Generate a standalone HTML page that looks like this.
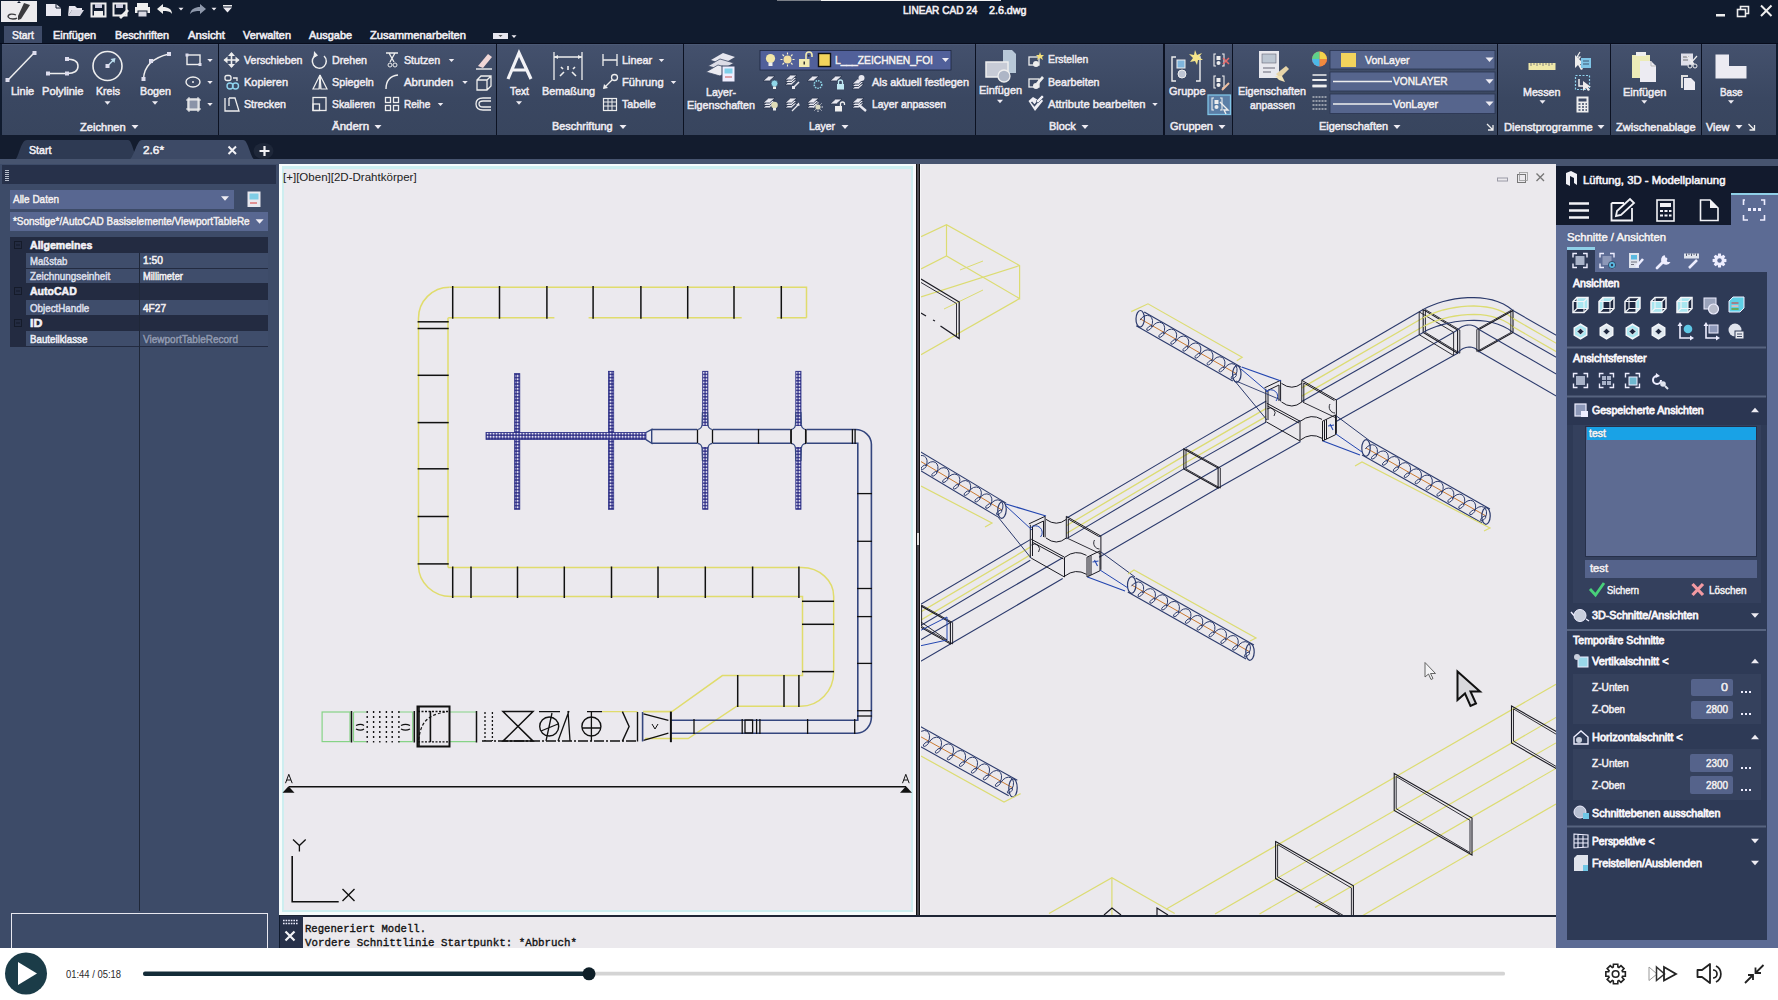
<!DOCTYPE html>
<html><head><meta charset="utf-8"><title>LINEAR CAD 24</title>
<style>
*{margin:0;padding:0;box-sizing:border-box}
html,body{width:1778px;height:1000px;overflow:hidden;background:#101b2e;font-family:"Liberation Sans",sans-serif;position:relative}
.a{position:absolute}
svg.a{overflow:visible}
.t{position:absolute;white-space:pre;transform-origin:0 50%;-webkit-text-stroke:0.6px currentColor}
</style></head><body>
<div class="a" style="left:0px;top:0px;width:1778px;height:26px;background:#101b2e;"></div><div class="a" style="left:821px;top:0px;width:180px;height:1px;background:#f4f4f4;"></div><div class="a" style="left:777px;top:0px;width:44px;height:1px;background:#7a7f88;"></div><div class="a" style="left:1px;top:1px;width:36px;height:21px;background:#ecebee;"></div><svg class="a" style="left:0px;top:0px;" width="1778" height="24" viewBox="0 0 1778 24"><path d="M24 3 L30 5 L21 19 L18 20 L18 16 Z" fill="#3a3a3e"/><path d="M8 17 C8 13 14 14 16 15" stroke="#3a3a3e" stroke-width="1.3" fill="none"/><path d="M8 17 C10 20 16 19 17 18" stroke="#3a3a3e" stroke-width="1.3" fill="none"/><path d="M17 3 L19 1 L21 3 Z" fill="#101b2e"/><path d="M46 4 H56 L61 8 V16 H46 Z" fill="#e8e8f0"/><path d="M56 4 V8 H61" fill="none" stroke="#101b2e" stroke-width="1"/><path d="M69 6 H75 L77 8 H82 V10 H72 L68 16 Z" fill="#e8e8f0"/><path d="M72 10 H84 L80 16 H68 Z" fill="#d8d8e2"/><rect x="91.5" y="3.5" width="14" height="13" fill="none" stroke="#eee" stroke-width="2"/><rect x="94" y="11" width="9" height="5" fill="#eee"/><rect x="95" y="4" width="7" height="4" fill="#ccd"/><rect x="113.5" y="3.5" width="13" height="12" fill="none" stroke="#eee" stroke-width="2"/><rect x="116" y="4" width="7" height="4" fill="#ccd"/><path d="M119 17 L127 9 L129 11 L121 19 Z" fill="#eee"/><rect x="137" y="3" width="11" height="4" fill="#eee"/><rect x="135" y="7" width="15" height="6" fill="#eee"/><rect x="138" y="11" width="9" height="6" fill="#d8d8e2" stroke="#101b2e"/><path d="M157 9 L163 4 V7 C168 7 172 9 172 14 C170 11 167 11 163 11 V14 Z" fill="#eee"/><polygon points="178.5,7.625 183.5,7.625 181,10.375" fill="#eeecf3"/><path d="M206 9 L200 4 V7 C195 7 191 9 190 14 C193 11 196 11 200 11 V14 Z" fill="#8e98ab"/><polygon points="211.5,7.625 216.5,7.625 214,10.375" fill="#eeecf3"/><rect x="223" y="5" width="9" height="1.5" fill="#eee"/><polygon points="223.0,7.525 232.0,7.525 227.5,12.475" fill="#eeecf3"/><rect x="1716" y="14" width="9" height="2.5" fill="#eee"/><rect x="1737.5" y="9.5" width="8" height="7" fill="none" stroke="#eee" stroke-width="1.6"/><path d="M1740.5 9 V6.5 H1748.5 V13.5 H1746" fill="none" stroke="#eee" stroke-width="1.6"/><path d="M1761 5.5 L1771.5 16 M1771.5 5.5 L1761 16" stroke="#eee" stroke-width="2"/></svg><span class="t" style="left:903.0px;top:5.1px;font-size:11.5px;line-height:11.5px;font-weight:400;color:#f2f0f5;transform:scaleX(0.876);text-shadow:0 0 1.2px rgba(8,12,25,0.95);">LINEAR CAD 24</span><span class="t" style="left:989.0px;top:5.1px;font-size:11.5px;line-height:11.5px;font-weight:400;color:#f2f0f5;transform:scaleX(0.931);text-shadow:0 0 1.2px rgba(8,12,25,0.95);">2.6.dwg</span><div class="a" style="left:0px;top:26px;width:1778px;height:18px;background:#101b2e;"></div><div class="a" style="left:4px;top:26px;width:38px;height:18px;background:#3e4b68;"></div><svg class="a" style="left:0px;top:26px;" width="1778" height="18" viewBox="0 26 1778 18"><rect x="493" y="33" width="15" height="6" fill="#e6e6ee"/><polygon points="498.5,34.9 502.5,34.9 500.5,37.1" fill="#555"/><polygon points="511.5,35.125 516.5,35.125 514,37.875" fill="#eeecf3"/></svg><span class="t" style="left:12.0px;top:30.1px;font-size:11.5px;line-height:11.5px;font-weight:400;color:#f0eef4;transform:scaleX(0.905);text-shadow:0 0 1.2px rgba(8,12,25,0.95);">Start</span><span class="t" style="left:53.0px;top:30.1px;font-size:11.5px;line-height:11.5px;font-weight:400;color:#f0eef4;transform:scaleX(0.947);text-shadow:0 0 1.2px rgba(8,12,25,0.95);">Einfügen</span><span class="t" style="left:115.0px;top:30.1px;font-size:11.5px;line-height:11.5px;font-weight:400;color:#f0eef4;transform:scaleX(0.939);text-shadow:0 0 1.2px rgba(8,12,25,0.95);">Beschriften</span><span class="t" style="left:188.0px;top:30.1px;font-size:11.5px;line-height:11.5px;font-weight:400;color:#f0eef4;transform:scaleX(0.981);text-shadow:0 0 1.2px rgba(8,12,25,0.95);">Ansicht</span><span class="t" style="left:243.0px;top:30.1px;font-size:11.5px;line-height:11.5px;font-weight:400;color:#f0eef4;transform:scaleX(0.950);text-shadow:0 0 1.2px rgba(8,12,25,0.95);">Verwalten</span><span class="t" style="left:309.0px;top:30.1px;font-size:11.5px;line-height:11.5px;font-weight:400;color:#f0eef4;transform:scaleX(0.947);text-shadow:0 0 1.2px rgba(8,12,25,0.95);">Ausgabe</span><span class="t" style="left:370.0px;top:30.1px;font-size:11.5px;line-height:11.5px;font-weight:400;color:#f0eef4;transform:scaleX(0.969);text-shadow:0 0 1.2px rgba(8,12,25,0.95);">Zusammenarbeiten</span><div class="a" style="left:0px;top:44px;width:1778px;height:91px;background:linear-gradient(#44516d,#3a4761 60%,#38455e);"></div><div class="a" style="left:0px;top:44px;width:2px;height:91px;background:#101b2e;"></div><div class="a" style="left:0px;top:43px;width:1778px;height:1px;background:#070c1c;"></div><div class="a" style="left:2px;top:44px;width:1774px;height:1px;background:#4b5975;"></div><div class="a" style="left:217.5px;top:44px;width:1.6px;height:91px;background:#0c1222;"></div><div class="a" style="left:495.5px;top:44px;width:1.6px;height:91px;background:#0c1222;"></div><div class="a" style="left:682.5px;top:44px;width:1.6px;height:91px;background:#0c1222;"></div><div class="a" style="left:974.5px;top:44px;width:1.6px;height:91px;background:#0c1222;"></div><div class="a" style="left:1163.3px;top:44px;width:1.6px;height:91px;background:#0c1222;"></div><div class="a" style="left:1231.5px;top:44px;width:1.6px;height:91px;background:#0c1222;"></div><div class="a" style="left:1496.5px;top:44px;width:1.6px;height:91px;background:#0c1222;"></div><div class="a" style="left:1609.5px;top:44px;width:1.6px;height:91px;background:#0c1222;"></div><div class="a" style="left:1700.5px;top:44px;width:1.6px;height:91px;background:#0c1222;"></div><div class="a" style="left:1776px;top:44px;width:2px;height:91px;background:#101b2e;"></div><svg class="a" style="left:0px;top:44px;" width="1778" height="91" viewBox="0 44 1778 91"><path d="M8 80 L34 53" stroke="#eee" stroke-width="1.5"/><rect x="5.5" y="78" width="4" height="4" fill="#dde"/><rect x="32.5" y="51" width="4" height="4" fill="#dde"/><path d="M48 73.5 H67 M66 59 C75 59 78 62 78 66 C78 70 75 73.5 67 73.5" stroke="#eee" stroke-width="1.5" fill="none"/><rect x="46" y="71.5" width="4" height="4" fill="#dde"/><rect x="65" y="71.5" width="4" height="4" fill="#dde"/><rect x="65" y="57" width="4" height="4" fill="#dde"/><circle cx="107.5" cy="66" r="14.5" stroke="#eee" stroke-width="1.6" fill="none"/><path d="M107.5 66 L114 59.5" stroke="#bde" stroke-width="1.4"/><polygon points="115.5,58 110.5,59 114.5,63" fill="#bde"/><rect x="105.5" y="64" width="4" height="4" fill="#dde"/><polygon points="104.5,101.35 110.5,101.35 107.5,104.65" fill="#eeecf3"/><path d="M143.5 79 C144 67 152 58 169 54" stroke="#eee" stroke-width="1.5" fill="none"/><rect x="141.5" y="77" width="4" height="4" fill="#dde"/><rect x="149" y="59" width="4" height="4" fill="#dde"/><rect x="167" y="52" width="4" height="4" fill="#dde"/><polygon points="152.0,101.35 158.0,101.35 155,104.65" fill="#eeecf3"/><rect x="187" y="55" width="13" height="9.5" fill="none" stroke="#eee" stroke-width="1.4"/><rect x="185.5" y="53.5" width="3" height="3" fill="#dde"/><rect x="198.5" y="63" width="3" height="3" fill="#dde"/><polygon points="207.25,58.9875 212.75,58.9875 210,62.0125" fill="#eeecf3"/><ellipse cx="193" cy="82" rx="7" ry="5" stroke="#eee" stroke-width="1.4" fill="none"/><circle cx="193" cy="82" r="1" fill="#eee"/><polygon points="207.25,80.9875 212.75,80.9875 210,84.0125" fill="#eeecf3"/><rect x="188" y="99" width="11" height="11" fill="#8a93a8" stroke="#eee" stroke-width="1.4"/><path d="M186 100 H201 M186 109 H201 M189 97 V112 M198 97 V112" stroke="#eee" stroke-width="1"/><polygon points="207.25,102.9875 212.75,102.9875 210,106.0125" fill="#eeecf3"/><polygon points="131.5,125.075 138.5,125.075 135,128.925" fill="#eeecf3"/><path d="M231.5 53 V67 M224.5 60 H238.5" stroke="#eee" stroke-width="1.6"/><polygon points="231.5,52 228,56 235,56" fill="#eee"/><polygon points="231.5,68 228,64 235,64" fill="#eee"/><polygon points="223.5,60 227.5,56.5 227.5,63.5" fill="#eee"/><polygon points="239.5,60 235.5,56.5 235.5,63.5" fill="#eee"/><rect x="225" y="75.5" width="6" height="5" rx="2" stroke="#eee" stroke-width="1.3" fill="none"/><path d="M233 78 H237 V81" stroke="#eee" stroke-width="1.3" fill="none"/><circle cx="230" cy="86" r="3" stroke="#8fd3ee" stroke-width="1.4" fill="none"/><circle cx="235.5" cy="86" r="3" stroke="#8fd3ee" stroke-width="1.4" fill="none"/><path d="M225 98 V111 H239 L235 98 H229" stroke="#eee" stroke-width="1.3" fill="none"/><path d="M229 98 V106" stroke="#eee" stroke-width="1.3"/><path d="M324 56 A7 7 0 1 1 316 55" stroke="#eee" stroke-width="1.5" fill="none"/><polygon points="314,51 318,55.5 313.5,58" fill="#eee"/><path d="M320 75 L313 89 H319 Z M320 75 L327 89 H321 Z" stroke="#eee" stroke-width="1.2" fill="none"/><path d="M320 75 V89" stroke="#eee" stroke-width="1.3"/><rect x="313" y="97.5" width="13" height="13" stroke="#eee" stroke-width="1.3" fill="none"/><rect x="313" y="104" width="6.5" height="6.5" stroke="#eee" stroke-width="1.3" fill="none"/><path d="M386 53 H398 M389 53 L394 62 M395 53 L390 62" stroke="#eee" stroke-width="1.3"/><circle cx="390" cy="65" r="2" stroke="#eee" fill="none"/><circle cx="395" cy="65" r="2" stroke="#eee" fill="none"/><path d="M386 89 C386 80 390 76 398 75" stroke="#eee" stroke-width="1.4" fill="none"/><rect x="385.5" y="97.5" width="5" height="5" stroke="#eee" stroke-width="1.3" fill="none"/><rect x="393.5" y="97.5" width="5" height="5" stroke="#eee" stroke-width="1.3" fill="none"/><rect x="385.5" y="105.5" width="5" height="5" stroke="#eee" stroke-width="1.3" fill="none"/><rect x="393.5" y="105.5" width="5" height="5" stroke="#eee" stroke-width="1.3" fill="none"/><polygon points="448.75,58.9875 454.25,58.9875 451.5,62.0125" fill="#eeecf3"/><polygon points="462.25,80.9875 467.75,80.9875 465,84.0125" fill="#eeecf3"/><polygon points="437.75,102.9875 443.25,102.9875 440.5,106.0125" fill="#eeecf3"/><path d="M478 66 L488 54 L492 57 L483 68 Z" fill="#f1d7d7"/><path d="M476 69 H492" stroke="#eee" stroke-width="1.4"/><path d="M477 80 L481 76 H491 V86 L487 90 H477 Z M477 80 H487 V90 M487 80 L491 76" stroke="#eee" stroke-width="1.3" fill="none"/><path d="M491 98 H483 C478 98 476 101 476 104 C476 107 478 110 483 110 H491 M491 101 H483 C481 101 479 102 479 104 C479 106 481 107 483 107 H491" stroke="#eee" stroke-width="1.3" fill="none"/><polygon points="374.5,125.075 381.5,125.075 378,128.925" fill="#eeecf3"/><path d="M508 79 L519 53 L531 79 M512 70 H526" stroke="#f2f2f6" stroke-width="3.2" fill="none"/><polygon points="516.0,101.35 522.0,101.35 519,104.65" fill="#eeecf3"/><path d="M554 52 V80 M582 52 V80 M554 57 H582" stroke="#eee" stroke-width="1.3"/><polygon points="554,57 558,55 558,59" fill="#eee"/><polygon points="582,57 578,55 578,59" fill="#eee"/><path d="M560 76 L564 72 M576 76 L572 72 M568 70 V66 M563 69 L561 67 M573 69 L575 67" stroke="#eee" stroke-width="1.6"/><path d="M603 54 V66 M617 54 V66 M603 60 H617" stroke="#eee" stroke-width="1.3"/><path d="M604 88 L612 80" stroke="#eee" stroke-width="1.3"/><circle cx="614.5" cy="77.5" r="3" stroke="#eee" stroke-width="1.3" fill="none"/><polygon points="603,89 604,84 608,88" fill="#eee"/><rect x="603.5" y="98.5" width="13" height="12" stroke="#eee" stroke-width="1.2" fill="none"/><path d="M603.5 102 H616.5 M603.5 106 H616.5 M608 98.5 V110.5 M612 98.5 V110.5" stroke="#eee" stroke-width="1"/><polygon points="658.75,58.9875 664.25,58.9875 661.5,62.0125" fill="#eeecf3"/><polygon points="670.75,80.9875 676.25,80.9875 673.5,84.0125" fill="#eeecf3"/><polygon points="619.5,125.075 626.5,125.075 623,128.925" fill="#eeecf3"/><path d="M711 60 L723 53 L735 57 L723 64 Z" fill="#e6e6ee"/><path d="M708 66 L720 59 L734 63 L722 70 Z" fill="#dcdce6" stroke="#3c4965" stroke-width="0.8"/><path d="M706 72 L718 65 L732 69 L720 76 Z" fill="#ececf2" stroke="#3c4965" stroke-width="0.8"/><rect x="722" y="66" width="13" height="16" fill="#eef" stroke="#3c4965"/><rect x="724.5" y="68.5" width="8" height="5" fill="#7fd0ea"/><path d="M725 77 H732" stroke="#c55" stroke-width="1"/><rect x="760" y="50.5" width="191" height="19.5" fill="#51609a" stroke="#1d2640" stroke-width="0.8"/><circle cx="770.5" cy="58.5" r="4.6" fill="#f2e6a8"/><rect x="768.5" y="62.5" width="4" height="3.5" fill="#eee"/><circle cx="787.5" cy="59.5" r="4" fill="#f2dfa0"/><path d="M787.5 52.5 V54.5 M787.5 64.5 V66.5 M780.5 59.5 H782.5 M792.5 59.5 H794.5 M782.5 54.5 L784 56 M792.5 54.5 L791 56 M782.5 64.5 L784 63 M792.5 64.5 L791 63" stroke="#f4f0d0" stroke-width="1.1"/><rect x="799" y="59" width="10.5" height="8" fill="#f0eab0"/><rect x="803.5" y="61.5" width="1.5" height="3" fill="#333"/><path d="M806 59 V55 A3 3 0 0 1 812 55 V57" stroke="#f0eab0" stroke-width="1.6" fill="none"/><circle cx="808.7" cy="55.8" r="1" fill="#333"/><rect x="818.5" y="53.5" width="12" height="13" fill="#f2d35c" stroke="#111" stroke-width="1.4"/><path d="M763 81 L768.5 76 H775 L769.5 81 Z" fill="#e8e8f0" stroke="#2c3850" stroke-width="0.9"/><circle cx="774.5" cy="83.5" r="3.4" fill="#8fd6e8" stroke="#2a3a55" stroke-width="0.6"/><rect x="773" y="86.5" width="3" height="2.5" fill="#eee"/><path d="M785 85 L790.5 80 H797 L791.5 85 Z" fill="#e8e8f0" stroke="#2c3850" stroke-width="0.9"/><path d="M785 82.5 L790.5 77.5 H797 L791.5 82.5 Z" fill="#e8e8f0" stroke="#2c3850" stroke-width="0.9"/><path d="M785 80 L790.5 75 H797 L791.5 80 Z" fill="#e8e8f0" stroke="#2c3850" stroke-width="0.9"/><path d="M793 88 L799 82" stroke="#e8e8f0" stroke-width="1.6"/><rect x="792" y="86" width="3" height="3" fill="#e8e8f0"/><path d="M807 81 L812.5 76 H819 L813.5 81 Z" fill="#e8e8f0" stroke="#2c3850" stroke-width="0.9"/><circle cx="818" cy="84.5" r="3.8" fill="none" stroke="#8fd6e8" stroke-width="1.5" stroke-dasharray="1.5 1"/><path d="M830 81 L835.5 76 H842 L836.5 81 Z" fill="#e8e8f0" stroke="#2c3850" stroke-width="0.9"/><rect x="837" y="84" width="7" height="5.5" fill="#bfe8f2"/><path d="M838.5 84 V82 A2 2 0 0 1 842.5 82 V84" stroke="#bfe8f2" stroke-width="1.3" fill="none"/><path d="M852 89 L857.5 84 H864 L858.5 89 Z" fill="#e8e8f0" stroke="#2c3850" stroke-width="0.9"/><path d="M852 86.5 L857.5 81.5 H864 L858.5 86.5 Z" fill="#e8e8f0" stroke="#2c3850" stroke-width="0.9"/><path d="M852 84 L857.5 79 H864 L858.5 84 Z" fill="#e8e8f0" stroke="#2c3850" stroke-width="0.9"/><circle cx="861.5" cy="78" r="3" fill="#e8e8f0"/><path d="M763 108 L768.5 103 H775 L769.5 108 Z" fill="#e8e8f0" stroke="#2c3850" stroke-width="0.9"/><path d="M763 105.5 L768.5 100.5 H775 L769.5 105.5 Z" fill="#e8e8f0" stroke="#2c3850" stroke-width="0.9"/><path d="M763 103 L768.5 98 H775 L769.5 103 Z" fill="#e8e8f0" stroke="#2c3850" stroke-width="0.9"/><circle cx="774.5" cy="105" r="3.3" fill="#e0ddb8"/><rect x="773" y="108" width="3" height="2.5" fill="#eee"/><path d="M785 108 L790.5 103 H797 L791.5 108 Z" fill="#e8e8f0" stroke="#2c3850" stroke-width="0.9"/><path d="M785 105.5 L790.5 100.5 H797 L791.5 105.5 Z" fill="#e8e8f0" stroke="#2c3850" stroke-width="0.9"/><path d="M785 103 L790.5 98 H797 L791.5 103 Z" fill="#e8e8f0" stroke="#2c3850" stroke-width="0.9"/><path d="M792 111 L799 104" stroke="#e8e8f0" stroke-width="1.3"/><polygon points="799,102.5 799.5,106 796,105" fill="#e8e8f0"/><path d="M807 108 L812.5 103 H819 L813.5 108 Z" fill="#e8e8f0" stroke="#2c3850" stroke-width="0.9"/><path d="M807 105.5 L812.5 100.5 H819 L813.5 105.5 Z" fill="#e8e8f0" stroke="#2c3850" stroke-width="0.9"/><path d="M807 103 L812.5 98 H819 L813.5 103 Z" fill="#e8e8f0" stroke="#2c3850" stroke-width="0.9"/><circle cx="818" cy="107" r="2.6" fill="#d8d8c0"/><path d="M818 102 V103.5 M818 110.5 V112 M813 107 H814.5 M821.5 107 H823 M814.5 103.5 L815.5 104.5 M821.5 103.5 L820.5 104.5 M814.5 110.5 L815.5 109.5 M821.5 110.5 L820.5 109.5" stroke="#e8e8f0" stroke-width="1"/><path d="M830 104 L835.5 99 H842 L836.5 104 Z" fill="#e8e8f0" stroke="#2c3850" stroke-width="0.9"/><rect x="835" y="106" width="7" height="5.5" fill="#eee"/><path d="M840.5 106 V104 A2 2 0 0 1 844.5 104 V105" stroke="#eee" stroke-width="1.3" fill="none"/><path d="M852 108 L857.5 103 H864 L858.5 108 Z" fill="#e8e8f0" stroke="#2c3850" stroke-width="0.9"/><path d="M852 105.5 L857.5 100.5 H864 L858.5 105.5 Z" fill="#e8e8f0" stroke="#2c3850" stroke-width="0.9"/><path d="M852 103 L857.5 98 H864 L858.5 103 Z" fill="#e8e8f0" stroke="#2c3850" stroke-width="0.9"/><path d="M859 105 L866 111" stroke="#e8e8f0" stroke-width="2.4"/><polygon points="942.0,58.075 949.0,58.075 945.5,61.925" fill="#eeecf3"/><polygon points="841.5,125.075 848.5,125.075 845,128.925" fill="#eeecf3"/><path d="M1003 50 H1012 L1016 54 V73 H1003 Z" fill="#b8c8d8"/><rect x="986" y="62" width="22" height="15" fill="#c7cbd6" stroke="#eee" stroke-width="1.5"/><circle cx="1004" cy="76" r="6" fill="#aeb6c6" stroke="#eee" stroke-width="1.3"/><polygon points="997.0,99.85 1003.0,99.85 1000,103.15" fill="#eeecf3"/><rect x="1029" y="57" width="10" height="8" stroke="#eee" stroke-width="1.3" fill="none"/><circle cx="1036" cy="64" r="3" fill="#eee"/><path d="M1040 52 L1041 55 L1044 55 L1042 57 L1043 60 L1040 58 L1037 60 L1038 57 L1036 55 L1039 55 Z" fill="#f3e07a"/><rect x="1029" y="79" width="10" height="8" stroke="#eee" stroke-width="1.3" fill="none"/><circle cx="1036" cy="86" r="3" fill="#eee"/><path d="M1036 83 L1042 76 L1044 78 L1038 85 Z" fill="#eee"/><path d="M1028.5 101 L1033 97 L1038 100 L1041 98 L1043 101 L1035 111 Z" fill="#eeeef4"/><path d="M1031.5 102 L1034.5 105.5 L1039 100" stroke="#3c4965" stroke-width="1.6" fill="none"/><path d="M1036 101 L1042 95 L1044 97 L1038 103 Z" fill="#eeeef4" stroke="#3c4965" stroke-width="0.6"/><polygon points="1152.25,102.9875 1157.75,102.9875 1155,106.0125" fill="#eeecf3"/><polygon points="1081.5,125.075 1088.5,125.075 1085,128.925" fill="#eeecf3"/><path d="M1176 57 H1172 V81 H1176 M1196 57 H1200 V81 H1196" stroke="#eee" stroke-width="1.4" fill="none"/><rect x="1177" y="60" width="8" height="8" fill="#7fb5dc" stroke="#eee"/><circle cx="1182" cy="74" r="4" fill="#bfc6d4" stroke="#eee"/><path d="M1195 50 L1197 55 L1202 53 L1199 57 L1203 60 L1198 60 L1197 65 L1195 61 L1190 62 L1193 58 L1189 54 L1194 55 Z" fill="#f6e58a"/><path d="M1216 54 H1214 V66 H1216 M1222 54 H1224 V66 H1222" stroke="#eee" stroke-width="1.1" fill="none"/><rect x="1216.5" y="56" width="4" height="4" fill="#eee"/><circle cx="1218.5" cy="63" r="2" fill="#eee"/><path d="M1223 58 L1229 64 M1229 58 L1223 64" stroke="#e86a6a" stroke-width="1.5"/><path d="M1216 76 H1214 V88 H1216 M1222 76 H1224 V88 H1222" stroke="#eee" stroke-width="1.1" fill="none"/><rect x="1216.5" y="78" width="4" height="4" fill="#eee"/><circle cx="1218.5" cy="85" r="2" fill="#eee"/><path d="M1222 90 L1229 83" stroke="#f0c0a0" stroke-width="2"/><rect x="1208" y="95" width="22.5" height="19.5" fill="#5b7ea6" stroke="#7fc4e6" stroke-width="1.3"/><path d="M1214 98 H1212 V110 H1214 M1220 98 H1222 V110 H1220" stroke="#eee" stroke-width="1.1" fill="none"/><rect x="1214.5" y="100" width="4" height="4" fill="#eee"/><circle cx="1216.5" cy="107" r="2" fill="#eee"/><path d="M1220 102 L1228 110 L1224 110 L1226 114" stroke="#eee" stroke-width="1.4" fill="none"/><polygon points="1218.5,125.075 1225.5,125.075 1222,128.925" fill="#eeecf3"/><rect x="1259" y="51" width="20" height="27" fill="#e8e8ee"/><rect x="1262" y="54" width="14" height="9" fill="#bcc6d2" stroke="#667" stroke-width="0.6"/><path d="M1263 68 H1275 M1263 72 H1271" stroke="#667"/><path d="M1276 74 L1286 66 L1289 69 L1280 78 Z" fill="#e7d4a7"/><path d="M1275 76 L1279 80 L1285 82 L1282 76 Z" fill="#f1e2b5"/><circle cx="1319.5" cy="59" r="7.5" fill="#e55"/><path d="M1319.5 59 L1319.5 51.5 A7.5 7.5 0 0 1 1327 59 Z" fill="#f3d34a"/><path d="M1319.5 59 L1327 59 A7.5 7.5 0 0 1 1319.5 66.5 Z" fill="#f08a3e"/><path d="M1319.5 59 L1319.5 66.5 A7.5 7.5 0 0 1 1312 59 Z" fill="#4cb8e8"/><path d="M1319.5 59 L1312 59 A7.5 7.5 0 0 1 1319.5 51.5 Z" fill="#5fd08a"/><path d="M1312.5 75 H1326.5 M1312.5 80 H1326.5 M1312.5 86 H1326.5" stroke="#eee" stroke-width="1.3"/><path d="M1312.5 80 H1326.5" stroke="#eee" stroke-width="2"/><path d="M1312.5 86 H1326.5" stroke="#eee" stroke-width="2.8"/><path d="M1312.5 97 H1326.5 M1312.5 101 H1326.5 M1312.5 105 H1326.5 M1312.5 109 H1326.5" stroke="#eee" stroke-width="1.2" stroke-dasharray="2 1"/><rect x="1330" y="50.5" width="165" height="18.5" fill="#56658d" stroke="#2a3550" stroke-width="0.8"/><polygon points="1485.5,57.55 1493.5,57.55 1489.5,61.95" fill="#eeecf3"/><rect x="1330" y="72" width="165" height="19" fill="#56658d" stroke="#2a3550" stroke-width="0.8"/><polygon points="1485.5,79.3 1493.5,79.3 1489.5,83.7" fill="#eeecf3"/><rect x="1330" y="94" width="165" height="19.5" fill="#56658d" stroke="#2a3550" stroke-width="0.8"/><polygon points="1485.5,101.55 1493.5,101.55 1489.5,105.95" fill="#eeecf3"/><rect x="1341" y="53" width="15" height="14" fill="#f2d35c"/><path d="M1333 81.5 H1392 M1333 104 H1392" stroke="#eee" stroke-width="1.6"/><polygon points="1393.5,125.075 1400.5,125.075 1397,128.925" fill="#eeecf3"/><path d="M1487 124 L1492.5 129.5 M1493 125 V130 H1488" stroke="#eee" stroke-width="1.3" fill="none"/><rect x="1528.5" y="63" width="27" height="7" fill="#efe8a9"/><path d="M1531 63 V66 M1534 63 V65 M1537 63 V66 M1540 63 V65 M1543 63 V66 M1546 63 V65 M1549 63 V66 M1552 63 V65" stroke="#667" stroke-width="0.8"/><polygon points="1539.5,100.35 1545.5,100.35 1542.5,103.65" fill="#eeecf3"/><path d="M1575 55 L1575 68 L1578 65 L1581 70 L1583 69 L1580 64 L1584 64 Z" fill="#eee"/><rect x="1581" y="58" width="10" height="10" fill="#7fc4e6"/><path d="M1583 61 H1589 M1583 64 H1589" stroke="#2f3e55" stroke-width="0.8"/><path d="M1580 52 L1577 57 L1580 57 L1577 61" stroke="#eee" stroke-width="1.2" fill="none"/><rect x="1575.5" y="75.5" width="14" height="14" fill="none" stroke="#8fd3ee" stroke-width="1.2" stroke-dasharray="2 1.5"/><path d="M1579 79 V86 H1586" stroke="#eee" stroke-width="1.5" fill="none"/><path d="M1583 81 L1583 91 L1586 88 L1588 91 L1590 90 L1588 87 L1591 87 Z" fill="#eee"/><rect x="1576.5" y="96.5" width="12" height="16" fill="#eee"/><rect x="1578.5" y="98.5" width="8" height="3" fill="#3c4965"/><path d="M1578.5 104 h2 M1582 104 h2 M1585.5 104 h1.5 M1578.5 107 h2 M1582 107 h2 M1585.5 107 h1.5 M1578.5 110 h2 M1582 110 h2 M1585.5 110 h1.5" stroke="#3c4965" stroke-width="1.6"/><polygon points="1597.5,125.075 1604.5,125.075 1601,128.925" fill="#eeecf3"/><rect x="1632" y="55" width="18" height="23" fill="#ecebb8"/><rect x="1636" y="52" width="10" height="4" fill="#eee"/><path d="M1640 61 H1651 L1656 66 V82 H1640 Z" fill="#ecebf2"/><path d="M1651 61 V66 H1656" stroke="#bbb" fill="none"/><polygon points="1641.3,100.35 1647.3,100.35 1644.3,103.65" fill="#eeecf3"/><rect x="1681" y="53.5" width="12" height="12" fill="#e0e0ea"/><path d="M1683 57 H1689 M1683 60 H1688" stroke="#666" stroke-width="0.9"/><circle cx="1690" cy="66" r="2" stroke="#eee" fill="#3c4965"/><circle cx="1695" cy="66" r="2" stroke="#eee" fill="#3c4965"/><path d="M1687 56 L1694 64 M1697 56 L1690 64" stroke="#eee" stroke-width="1.2"/><path d="M1681 75 H1688 L1688 77 H1683 V88 H1681 Z" fill="#ddd"/><path d="M1684 78 H1691 L1695 82 V90 H1684 Z" fill="#ecebf2"/><path d="M1715.5 54.5 H1729 V66 H1746.5 V78.5 H1715.5 Z" fill="#ecebf2"/><polygon points="1728.0,100.35 1734.0,100.35 1731,103.65" fill="#eeecf3"/><polygon points="1735.5,125.075 1742.5,125.075 1739,128.925" fill="#eeecf3"/><path d="M1748.5 124 L1754 129.5 M1754.5 125 V130 H1749.5" stroke="#eee" stroke-width="1.3" fill="none"/></svg><span class="t" style="left:10.5px;top:86.1px;font-size:11.5px;line-height:11.5px;font-weight:400;color:#eceaf2;transform:scaleX(0.954);text-shadow:0 0 1.2px rgba(8,12,25,0.95);">Linie</span><span class="t" style="left:42.0px;top:86.1px;font-size:11.5px;line-height:11.5px;font-weight:400;color:#eceaf2;transform:scaleX(0.969);text-shadow:0 0 1.2px rgba(8,12,25,0.95);">Polylinie</span><span class="t" style="left:96.0px;top:86.1px;font-size:11.5px;line-height:11.5px;font-weight:400;color:#eceaf2;transform:scaleX(0.916);text-shadow:0 0 1.2px rgba(8,12,25,0.95);">Kreis</span><span class="t" style="left:140.0px;top:86.1px;font-size:11.5px;line-height:11.5px;font-weight:400;color:#eceaf2;transform:scaleX(0.932);text-shadow:0 0 1.2px rgba(8,12,25,0.95);">Bogen</span><span class="t" style="left:80.0px;top:121.6px;font-size:11.5px;line-height:11.5px;font-weight:400;color:#eceaf2;transform:scaleX(0.966);text-shadow:0 0 1.2px rgba(8,12,25,0.95);">Zeichnen</span><span class="t" style="left:244.0px;top:54.6px;font-size:11.5px;line-height:11.5px;font-weight:400;color:#eceaf2;transform:scaleX(0.924);text-shadow:0 0 1.2px rgba(8,12,25,0.95);">Verschieben</span><span class="t" style="left:244.0px;top:76.6px;font-size:11.5px;line-height:11.5px;font-weight:400;color:#eceaf2;transform:scaleX(0.956);text-shadow:0 0 1.2px rgba(8,12,25,0.95);">Kopieren</span><span class="t" style="left:244.0px;top:99.1px;font-size:11.5px;line-height:11.5px;font-weight:400;color:#eceaf2;transform:scaleX(0.925);text-shadow:0 0 1.2px rgba(8,12,25,0.95);">Strecken</span><span class="t" style="left:331.5px;top:54.6px;font-size:11.5px;line-height:11.5px;font-weight:400;color:#eceaf2;transform:scaleX(0.928);text-shadow:0 0 1.2px rgba(8,12,25,0.95);">Drehen</span><span class="t" style="left:331.5px;top:76.6px;font-size:11.5px;line-height:11.5px;font-weight:400;color:#eceaf2;transform:scaleX(0.934);text-shadow:0 0 1.2px rgba(8,12,25,0.95);">Spiegeln</span><span class="t" style="left:331.5px;top:99.1px;font-size:11.5px;line-height:11.5px;font-weight:400;color:#eceaf2;transform:scaleX(0.899);text-shadow:0 0 1.2px rgba(8,12,25,0.95);">Skalieren</span><span class="t" style="left:403.7px;top:54.6px;font-size:11.5px;line-height:11.5px;font-weight:400;color:#eceaf2;transform:scaleX(0.928);text-shadow:0 0 1.2px rgba(8,12,25,0.95);">Stutzen</span><span class="t" style="left:403.7px;top:76.6px;font-size:11.5px;line-height:11.5px;font-weight:400;color:#eceaf2;transform:scaleX(0.988);text-shadow:0 0 1.2px rgba(8,12,25,0.95);">Abrunden</span><span class="t" style="left:403.7px;top:99.1px;font-size:11.5px;line-height:11.5px;font-weight:400;color:#eceaf2;transform:scaleX(0.875);text-shadow:0 0 1.2px rgba(8,12,25,0.95);">Reihe</span><span class="t" style="left:332.0px;top:121.1px;font-size:11.5px;line-height:11.5px;font-weight:400;color:#eceaf2;text-shadow:0 0 1.2px rgba(8,12,25,0.95);">Ändern</span><span class="t" style="left:510.0px;top:86.1px;font-size:11.5px;line-height:11.5px;font-weight:400;color:#eceaf2;transform:scaleX(0.901);text-shadow:0 0 1.2px rgba(8,12,25,0.95);">Text</span><span class="t" style="left:542.0px;top:86.1px;font-size:11.5px;line-height:11.5px;font-weight:400;color:#eceaf2;transform:scaleX(0.942);text-shadow:0 0 1.2px rgba(8,12,25,0.95);">Bemaßung</span><span class="t" style="left:622.0px;top:54.6px;font-size:11.5px;line-height:11.5px;font-weight:400;color:#eceaf2;transform:scaleX(0.938);text-shadow:0 0 1.2px rgba(8,12,25,0.95);">Linear</span><span class="t" style="left:622.0px;top:76.6px;font-size:11.5px;line-height:11.5px;font-weight:400;color:#eceaf2;transform:scaleX(0.971);text-shadow:0 0 1.2px rgba(8,12,25,0.95);">Führung</span><span class="t" style="left:622.0px;top:99.1px;font-size:11.5px;line-height:11.5px;font-weight:400;color:#eceaf2;transform:scaleX(0.924);text-shadow:0 0 1.2px rgba(8,12,25,0.95);">Tabelle</span><span class="t" style="left:552.4px;top:121.1px;font-size:11.5px;line-height:11.5px;font-weight:400;color:#eceaf2;transform:scaleX(0.948);text-shadow:0 0 1.2px rgba(8,12,25,0.95);">Beschriftung</span><span class="t" style="left:706.0px;top:86.6px;font-size:11.5px;line-height:11.5px;font-weight:400;color:#eceaf2;transform:scaleX(0.920);text-shadow:0 0 1.2px rgba(8,12,25,0.95);">Layer-</span><span class="t" style="left:687.0px;top:99.8px;font-size:11.5px;line-height:11.5px;font-weight:400;color:#eceaf2;transform:scaleX(0.933);text-shadow:0 0 1.2px rgba(8,12,25,0.95);">Eigenschaften</span><span class="t" style="left:835.0px;top:55.1px;font-size:11.5px;line-height:11.5px;font-weight:400;color:#f2f0f5;transform:scaleX(0.891);text-shadow:0 0 1.2px rgba(8,12,25,0.95);">L___ZEICHNEN_FOI</span><span class="t" style="left:871.5px;top:76.6px;font-size:11.5px;line-height:11.5px;font-weight:400;color:#eceaf2;transform:scaleX(0.948);text-shadow:0 0 1.2px rgba(8,12,25,0.95);">Als aktuell festlegen</span><span class="t" style="left:871.5px;top:99.1px;font-size:11.5px;line-height:11.5px;font-weight:400;color:#eceaf2;transform:scaleX(0.904);text-shadow:0 0 1.2px rgba(8,12,25,0.95);">Layer anpassen</span><span class="t" style="left:809.0px;top:121.1px;font-size:11.5px;line-height:11.5px;font-weight:400;color:#eceaf2;transform:scaleX(0.903);text-shadow:0 0 1.2px rgba(8,12,25,0.95);">Layer</span><span class="t" style="left:979.0px;top:85.1px;font-size:11.5px;line-height:11.5px;font-weight:400;color:#eceaf2;transform:scaleX(0.947);text-shadow:0 0 1.2px rgba(8,12,25,0.95);">Einfügen</span><span class="t" style="left:1047.5px;top:54.2px;font-size:11.5px;line-height:11.5px;font-weight:400;color:#eceaf2;transform:scaleX(0.898);text-shadow:0 0 1.2px rgba(8,12,25,0.95);">Erstellen</span><span class="t" style="left:1047.5px;top:76.6px;font-size:11.5px;line-height:11.5px;font-weight:400;color:#eceaf2;transform:scaleX(0.926);text-shadow:0 0 1.2px rgba(8,12,25,0.95);">Bearbeiten</span><span class="t" style="left:1047.5px;top:98.9px;font-size:11.5px;line-height:11.5px;font-weight:400;color:#eceaf2;transform:scaleX(0.971);text-shadow:0 0 1.2px rgba(8,12,25,0.95);">Attribute bearbeiten</span><span class="t" style="left:1049.0px;top:121.1px;font-size:11.5px;line-height:11.5px;font-weight:400;color:#eceaf2;transform:scaleX(0.953);text-shadow:0 0 1.2px rgba(8,12,25,0.95);">Block</span><span class="t" style="left:1169.0px;top:86.1px;font-size:11.5px;line-height:11.5px;font-weight:400;color:#eceaf2;transform:scaleX(0.952);text-shadow:0 0 1.2px rgba(8,12,25,0.95);">Gruppe</span><span class="t" style="left:1170.0px;top:121.1px;font-size:11.5px;line-height:11.5px;font-weight:400;color:#eceaf2;transform:scaleX(0.961);text-shadow:0 0 1.2px rgba(8,12,25,0.95);">Gruppen</span><span class="t" style="left:1238.0px;top:86.1px;font-size:11.5px;line-height:11.5px;font-weight:400;color:#eceaf2;transform:scaleX(0.933);text-shadow:0 0 1.2px rgba(8,12,25,0.95);">Eigenschaften</span><span class="t" style="left:1250.0px;top:99.8px;font-size:11.5px;line-height:11.5px;font-weight:400;color:#eceaf2;transform:scaleX(0.902);text-shadow:0 0 1.2px rgba(8,12,25,0.95);">anpassen</span><span class="t" style="left:1365.0px;top:54.6px;font-size:11.5px;line-height:11.5px;font-weight:400;color:#f2f0f5;transform:scaleX(0.918);text-shadow:0 0 1.2px rgba(8,12,25,0.95);">VonLayer</span><span class="t" style="left:1393.0px;top:76.1px;font-size:11.5px;line-height:11.5px;font-weight:400;color:#f2f0f5;transform:scaleX(0.882);text-shadow:0 0 1.2px rgba(8,12,25,0.95);">VONLAYER</span><span class="t" style="left:1393.0px;top:98.6px;font-size:11.5px;line-height:11.5px;font-weight:400;color:#f2f0f5;transform:scaleX(0.926);text-shadow:0 0 1.2px rgba(8,12,25,0.95);">VonLayer</span><span class="t" style="left:1319.0px;top:121.1px;font-size:11.5px;line-height:11.5px;font-weight:400;color:#eceaf2;transform:scaleX(0.947);text-shadow:0 0 1.2px rgba(8,12,25,0.95);">Eigenschaften</span><span class="t" style="left:1523.0px;top:86.5px;font-size:11.5px;line-height:11.5px;font-weight:400;color:#eceaf2;transform:scaleX(0.931);text-shadow:0 0 1.2px rgba(8,12,25,0.95);">Messen</span><span class="t" style="left:1503.5px;top:122.0px;font-size:11.5px;line-height:11.5px;font-weight:400;color:#eceaf2;transform:scaleX(0.971);text-shadow:0 0 1.2px rgba(8,12,25,0.95);">Dienstprogramme</span><span class="t" style="left:1622.5px;top:86.5px;font-size:11.5px;line-height:11.5px;font-weight:400;color:#eceaf2;transform:scaleX(0.958);text-shadow:0 0 1.2px rgba(8,12,25,0.95);">Einfügen</span><span class="t" style="left:1615.8px;top:122.0px;font-size:11.5px;line-height:11.5px;font-weight:400;color:#eceaf2;transform:scaleX(0.958);text-shadow:0 0 1.2px rgba(8,12,25,0.95);">Zwischenablage</span><span class="t" style="left:1719.7px;top:86.5px;font-size:11.5px;line-height:11.5px;font-weight:400;color:#eceaf2;transform:scaleX(0.862);text-shadow:0 0 1.2px rgba(8,12,25,0.95);">Base</span><span class="t" style="left:1706.3px;top:122.0px;font-size:11.5px;line-height:11.5px;font-weight:400;color:#eceaf2;transform:scaleX(0.947);text-shadow:0 0 1.2px rgba(8,12,25,0.95);">View</span><div class="a" style="left:0px;top:135px;width:1778px;height:25px;background:#131c2e;"></div><svg class="a" style="left:0px;top:135px;" width="1778" height="25" viewBox="0 135 1778 25"><path d="M14 160 C19 160 20 140 27 140 H128 C133 140 134 160 140 160 Z" fill="#2e3a53"/><path d="M128 160 C134 160 136 140 142 140 H243 C249 140 250 160 256 160 Z" fill="#3d4a66"/><ellipse cx="263.5" cy="151" rx="10" ry="8" fill="#1e2739"/><path d="M228.5 146.5 L236 154 M236 146.5 L228.5 154" stroke="#f2f2f6" stroke-width="2"/><path d="M264.5 146 V156 M259.5 151 H269.5" stroke="#f2f2f6" stroke-width="2.2"/></svg><div class="a" style="left:0px;top:159px;width:1778px;height:5px;background:#47546f;"></div><span class="t" style="left:29.4px;top:145.1px;font-size:11.5px;line-height:11.5px;font-weight:400;color:#f0eef4;transform:scaleX(0.926);text-shadow:0 0 1.2px rgba(8,12,25,0.95);">Start</span><span class="t" style="left:143.0px;top:145.1px;font-size:11.5px;line-height:11.5px;font-weight:400;color:#f0eef4;transform:scaleX(1.026);text-shadow:0 0 1.2px rgba(8,12,25,0.95);">2.6*</span><div class="a" style="left:0px;top:164px;width:279px;height:784px;background:#3d4b68;"></div><div class="a" style="left:2px;top:165px;width:274px;height:19px;background:#27314a;"></div><div class="a" style="left:5px;top:170px;width:4px;height:11px;background:repeating-linear-gradient(#b8bfcc 0 1px,transparent 1px 2px);"></div><div class="a" style="left:10px;top:189.5px;width:224px;height:19px;background:#586791;"></div><div class="a" style="left:10px;top:212px;width:258px;height:19.3px;background:#586791;"></div><div class="a" style="left:10px;top:237px;width:258px;height:110px;background:#232b41;"></div><div class="a" style="left:26px;top:253px;width:113px;height:15px;background:#3f4d6b;"></div><div class="a" style="left:140px;top:253px;width:128px;height:15px;background:#3f4d6b;"></div><div class="a" style="left:26px;top:269px;width:113px;height:14px;background:#3f4d6b;"></div><div class="a" style="left:140px;top:269px;width:128px;height:14px;background:#3f4d6b;"></div><div class="a" style="left:26px;top:300px;width:113px;height:14.5px;background:#3f4d6b;"></div><div class="a" style="left:140px;top:300px;width:128px;height:14.5px;background:#3f4d6b;"></div><div class="a" style="left:26px;top:331px;width:113px;height:15px;background:#3f4d6b;"></div><div class="a" style="left:140px;top:331px;width:128px;height:15px;background:#3f4d6b;"></div><div class="a" style="left:139px;top:253px;width:1px;height:658px;background:#1f2738;"></div><div class="a" style="left:11px;top:913px;width:257px;height:35px;background:#3d4b68;border:1.5px solid #e8e8f0;border-bottom:none"></div><svg class="a" style="left:0px;top:160px;" width="280" height="200" viewBox="0 160 280 200"><polygon points="221.0,196.3 229.0,196.3 225,200.7" fill="#eeecf3"/><rect x="247.5" y="191.5" width="13" height="15.5" fill="#e8e8ee"/><rect x="249.5" y="193.5" width="9" height="6" fill="#7fcde6"/><path d="M250 203 H257" stroke="#d55" stroke-width="1.2"/><polygon points="255.60000000000002,219.3 263.6,219.3 259.6,223.7" fill="#eeecf3"/><rect x="14.5" y="241.5" width="7" height="7" fill="none" stroke="#151b2a" stroke-width="1"/><path d="M16 245 H20" stroke="#151b2a"/><rect x="14.5" y="287.5" width="7" height="7" fill="none" stroke="#151b2a" stroke-width="1"/><path d="M16 291 H20" stroke="#151b2a"/><rect x="14.5" y="319.5" width="7" height="7" fill="none" stroke="#151b2a" stroke-width="1"/><path d="M16 323 H20" stroke="#151b2a"/></svg><span class="t" style="left:13.0px;top:193.8px;font-size:11px;line-height:11px;font-weight:400;color:#f0eef4;transform:scaleX(0.906);text-shadow:0 0 1.2px rgba(8,12,25,0.95);">Alle Daten</span><span class="t" style="left:13.0px;top:216.3px;font-size:11px;line-height:11px;font-weight:400;color:#f0eef4;transform:scaleX(0.905);text-shadow:0 0 1.2px rgba(8,12,25,0.95);">*Sonstige*/AutoCAD Basiselemente/ViewportTableRe</span><span class="t" style="left:29.7px;top:239.8px;font-size:11px;line-height:11px;font-weight:700;color:#f4f2f8;transform:scaleX(0.961);text-shadow:0 0 1.2px rgba(8,12,25,0.95);">Allgemeines</span><span class="t" style="left:29.7px;top:286.3px;font-size:11px;line-height:11px;font-weight:700;color:#f4f2f8;transform:scaleX(0.957);text-shadow:0 0 1.2px rgba(8,12,25,0.95);">AutoCAD</span><span class="t" style="left:29.7px;top:317.8px;font-size:11px;line-height:11px;font-weight:700;color:#f4f2f8;transform:scaleX(1.118);text-shadow:0 0 1.2px rgba(8,12,25,0.95);">ID</span><span class="t" style="left:29.7px;top:255.6px;font-size:10.5px;line-height:10.5px;font-weight:400;color:#d8dcea;transform:scaleX(0.913);text-shadow:0 0 1.2px rgba(8,12,25,0.95);">Maßstab</span><span class="t" style="left:29.7px;top:271.1px;font-size:10.5px;line-height:10.5px;font-weight:400;color:#d8dcea;transform:scaleX(0.942);text-shadow:0 0 1.2px rgba(8,12,25,0.95);">Zeichnungseinheit</span><span class="t" style="left:29.7px;top:302.6px;font-size:10.5px;line-height:10.5px;font-weight:400;color:#d8dcea;transform:scaleX(0.932);text-shadow:0 0 1.2px rgba(8,12,25,0.95);">ObjectHandle</span><span class="t" style="left:29.7px;top:334.1px;font-size:10.5px;line-height:10.5px;font-weight:400;color:#eceef6;transform:scaleX(0.926);text-shadow:0 0 1.2px rgba(8,12,25,0.95);">Bauteilklasse</span><span class="t" style="left:143.0px;top:255.1px;font-size:10.5px;line-height:10.5px;font-weight:400;color:#f0eef4;transform:scaleX(0.979);text-shadow:0 0 1.2px rgba(8,12,25,0.95);">1:50</span><span class="t" style="left:143.0px;top:271.1px;font-size:10.5px;line-height:10.5px;font-weight:400;color:#f0eef4;transform:scaleX(0.890);text-shadow:0 0 1.2px rgba(8,12,25,0.95);">Millimeter</span><span class="t" style="left:143.0px;top:302.6px;font-size:10.5px;line-height:10.5px;font-weight:400;color:#f0eef4;transform:scaleX(0.961);text-shadow:0 0 1.2px rgba(8,12,25,0.95);">4F27</span><span class="t" style="left:143.0px;top:334.1px;font-size:10.5px;line-height:10.5px;font-weight:400;color:#8e98b0;transform:scaleX(0.954);text-shadow:0 0 1.2px rgba(8,12,25,0.95);">ViewportTableRecord</span><div class="a" style="left:279px;top:164px;width:636px;height:751px;background:#f6fbfb;"></div><div class="a" style="left:281.5px;top:166px;width:631.5px;height:745.5px;background:#cdeef0;"></div><div class="a" style="left:283.5px;top:168.5px;width:627.5px;height:741px;background:#ebe9ee;"></div><div class="a" style="left:913.5px;top:164px;width:2px;height:751px;background:#f8f8fa;"></div><div class="a" style="left:915.5px;top:164px;width:4px;height:751px;background:#4a4a50;border-left:1px solid #111;border-right:1px solid #111"></div><div class="a" style="left:916.5px;top:533px;width:2.5px;height:12px;background:#4a4a50;border-left:1px solid #ddd;border-right:1px solid #ddd"></div><div class="a" style="left:919.5px;top:164px;width:1.5px;height:751px;background:#f6f6f8;"></div><div class="a" style="left:921px;top:164px;width:635px;height:751px;background:#ebe9ed;"></div><svg class="a" style="left:0px;top:0px;pointer-events:none" width="1778" height="1000" viewBox="0 0 1778 1000"><defs><pattern id="sp" width="3" height="3.2" patternUnits="userSpaceOnUse"><rect width="3" height="3.2" fill="#1e1e7c"/><rect x="0.6" y="0.6" width="1.9" height="2.0" fill="#e4e2f2"/></pattern></defs><path d="M449.5 287.2 H806.5 V317.7" stroke="#e0dc6c" stroke-width="1.5" fill="none" /><path d="M448.2 317.7 H554.4 M588.6 317.7 H741.7 M776.8 317.7 H806.5" stroke="#e0dc6c" stroke-width="1.5" fill="none" /><path d="M449.5 287.2 A31 31 0 0 0 418.5 318.5 V566 A33 31 0 0 0 451 596.6" stroke="#e0dc6c" stroke-width="1.5" fill="none" /><path d="M448 317.7 V567.5" stroke="#e0dc6c" stroke-width="1.5" fill="none" /><path d="M448 567.5 H801.6 A32 29 0 0 1 833.7 597 V672 A33 34 0 0 1 800.7 706.2 H736.8 L688.2 738.6 H645" stroke="#e0dc6c" stroke-width="1.5" fill="none" /><path d="M451 596.6 H802.5 V675.6 H722.4 L672 711.6 H643" stroke="#e0dc6c" stroke-width="1.5" fill="none" /><path d="M452.7 286 V318.7" stroke="#111" stroke-width="1.5" fill="none" /><path d="M499.5 286 V318.7" stroke="#111" stroke-width="1.5" fill="none" /><path d="M546.9 286 V318.7" stroke="#111" stroke-width="1.5" fill="none" /><path d="M593.1 286 V318.7" stroke="#111" stroke-width="1.5" fill="none" /><path d="M640.9 286 V318.7" stroke="#111" stroke-width="1.5" fill="none" /><path d="M687.7 286 V318.7" stroke="#111" stroke-width="1.5" fill="none" /><path d="M734 286 V318.7" stroke="#111" stroke-width="1.5" fill="none" /><path d="M781.3 286 V318.7" stroke="#111" stroke-width="1.5" fill="none" /><path d="M417.6 321.8 H448.7" stroke="#111" stroke-width="1.5" fill="none" /><path d="M417.6 328.5 H448.7" stroke="#111" stroke-width="1.5" fill="none" /><path d="M417.6 375.3 H448.7" stroke="#111" stroke-width="1.5" fill="none" /><path d="M417.6 422.6 H448.7" stroke="#111" stroke-width="1.5" fill="none" /><path d="M417.6 468.8 H448.7" stroke="#111" stroke-width="1.5" fill="none" /><path d="M417.6 516.5 H448.7" stroke="#111" stroke-width="1.5" fill="none" /><path d="M417.6 563.9 H448.7" stroke="#111" stroke-width="1.5" fill="none" /><path d="M452.7 566.5 V598" stroke="#111" stroke-width="1.5" fill="none" /><path d="M471 566.5 V598" stroke="#111" stroke-width="1.5" fill="none" /><path d="M517.5 566.5 V598" stroke="#111" stroke-width="1.5" fill="none" /><path d="M564.3 566.5 V598" stroke="#111" stroke-width="1.5" fill="none" /><path d="M611.5 566.5 V598" stroke="#111" stroke-width="1.5" fill="none" /><path d="M658 566.5 V598" stroke="#111" stroke-width="1.5" fill="none" /><path d="M705.3 566.5 V598" stroke="#111" stroke-width="1.5" fill="none" /><path d="M752.6 566.5 V598" stroke="#111" stroke-width="1.5" fill="none" /><path d="M798.9 566.5 V598" stroke="#111" stroke-width="1.5" fill="none" /><path d="M802 601.3 H834" stroke="#111" stroke-width="1.5" fill="none" /><path d="M802 624.3 H834" stroke="#111" stroke-width="1.5" fill="none" /><path d="M802 671.6 H834" stroke="#111" stroke-width="1.5" fill="none" /><path d="M737.7 675 V707" stroke="#111" stroke-width="1.5" fill="none" /><path d="M784 675 V707" stroke="#111" stroke-width="1.5" fill="none" /><path d="M798.9 675 V707" stroke="#111" stroke-width="1.5" fill="none" /><rect x="514.6" y="373.6" width="5.2" height="135.7" fill="url(#sp)" stroke="#2a2d86" stroke-width="0.8"/><rect x="608.5" y="371.3" width="5.2" height="138.0" fill="url(#sp)" stroke="#2a2d86" stroke-width="0.8"/><rect x="702.6999999999999" y="371.3" width="5.2" height="138.0" fill="url(#sp)" stroke="#2a2d86" stroke-width="0.8"/><rect x="795.8" y="371.3" width="5.2" height="138.0" fill="url(#sp)" stroke="#2a2d86" stroke-width="0.8"/><rect x="486" y="432.5" width="160" height="7" fill="url(#sp)" stroke="#2a2d86" stroke-width="0.8"/><path d="M651.7 429.5 H854.6 A16 15 0 0 1 871.4 445 V717 A15 16 0 0 1 857 733.2 H670.2" stroke="#34467e" stroke-width="1.6" fill="none" /><path d="M651.7 443.3 H857.8 V720.3 H670.2" stroke="#34467e" stroke-width="1.6" fill="none" /><path d="M646 432.5 L651.7 429.5 V443.3 L646 439.7" stroke="#34467e" stroke-width="1.4" fill="none" /><rect x="697.0" y="426" width="16" height="21" fill="#ebe9ed"/><path d="M697.5 429.5 V443.3 M712.5 429.5 V443.3" stroke="#111" stroke-width="1.3" fill="none" /><path d="M697.5 429.5 A5 5 0 0 0 702.0 424.5 M712.5 429.5 A5 5 0 0 1 708.0 424.5 M697.5 443.3 A5 5 0 0 1 702.0 448.3 M712.5 443.3 A5 5 0 0 0 708.0 448.3" stroke="#34467e" stroke-width="1.2" fill="none" /><path d="M702.0 424.5 L702.4 412 M708.0 424.5 L707.6 412 M702.0 448.3 L702.4 461 M708.0 448.3 L707.6 461" stroke="#34467e" stroke-width="1.1" fill="none" /><rect x="790.4" y="426" width="16" height="21" fill="#ebe9ed"/><path d="M790.9 429.5 V443.3 M805.9 429.5 V443.3" stroke="#111" stroke-width="1.3" fill="none" /><path d="M790.9 429.5 A5 5 0 0 0 795.4 424.5 M805.9 429.5 A5 5 0 0 1 801.4 424.5 M790.9 443.3 A5 5 0 0 1 795.4 448.3 M805.9 443.3 A5 5 0 0 0 801.4 448.3" stroke="#34467e" stroke-width="1.2" fill="none" /><path d="M795.4 424.5 L795.8 412 M801.4 424.5 L801.0 412 M795.4 448.3 L795.8 461 M801.4 448.3 L801.0 461" stroke="#34467e" stroke-width="1.1" fill="none" /><path d="M758.5 429 V444" stroke="#111" stroke-width="1.3" fill="none" /><path d="M791.2 429 V444" stroke="#111" stroke-width="1.3" fill="none" /><path d="M805.6 429 V444" stroke="#111" stroke-width="1.3" fill="none" /><path d="M852.4 429 V444" stroke="#111" stroke-width="1.3" fill="none" /><path d="M855.1 429 V444" stroke="#111" stroke-width="1.3" fill="none" /><path d="M857 493.6 H872" stroke="#111" stroke-width="1.3" fill="none" /><path d="M857 541.3 H872" stroke="#111" stroke-width="1.3" fill="none" /><path d="M857 588.5 H872" stroke="#111" stroke-width="1.3" fill="none" /><path d="M857 616.6 H872" stroke="#111" stroke-width="1.3" fill="none" /><path d="M857 663.4 H872" stroke="#111" stroke-width="1.3" fill="none" /><path d="M857 710.7 H872" stroke="#111" stroke-width="1.3" fill="none" /><path d="M857 716 H872" stroke="#111" stroke-width="1.3" fill="none" /><path d="M694 719 V734" stroke="#111" stroke-width="1.3" fill="none" /><path d="M742.2 719 V734" stroke="#111" stroke-width="1.3" fill="none" /><path d="M756.6 719 V734" stroke="#111" stroke-width="1.3" fill="none" /><path d="M759.9 719 V734" stroke="#111" stroke-width="1.3" fill="none" /><path d="M807.6 719 V734" stroke="#111" stroke-width="1.3" fill="none" /><path d="M854.7 719 V734" stroke="#111" stroke-width="1.3" fill="none" /><rect x="745" y="720" width="7.6" height="13" fill="none" stroke="#111" stroke-width="1.3"/><rect x="322.1" y="712" width="27.9" height="29.6" fill="none" stroke="#86d386" stroke-width="1.2"/><path d="M353.5 712 H366.2 M353.5 741.6 H366.2 M353.5 712 V741.6 M398.9 712 H412.7 V741.6 H398.9 M449.7 712 H476 M449.7 741.6 H476" stroke="#86d386" stroke-width="1.2" fill="none"/><path d="M351.5 711 V742.5" stroke="#111" stroke-width="1.5" fill="none" /><path d="M414.3 711 V742.5" stroke="#111" stroke-width="1.5" fill="none" /><path d="M476.5 711 V742.5" stroke="#111" stroke-width="1.5" fill="none" /><path d="M367.2 711 V742.5" stroke="#111" stroke-width="1.4" fill="none" stroke-dasharray="2 3"/><path d="M373.6 711 V742.5" stroke="#111" stroke-width="1.4" fill="none" stroke-dasharray="2 3"/><path d="M379.8 711 V742.5" stroke="#111" stroke-width="1.4" fill="none" stroke-dasharray="2 3"/><path d="M386.4 711 V742.5" stroke="#111" stroke-width="1.4" fill="none" stroke-dasharray="2 3"/><path d="M392.2 711 V742.5" stroke="#111" stroke-width="1.4" fill="none" stroke-dasharray="2 3"/><path d="M398.9 711 V742.5" stroke="#111" stroke-width="1.4" fill="none" stroke-dasharray="2 3"/><path d="M356 725.5 C359 724 362 724 364 725.5 M356 729 C359 730.5 362 730.5 364 729" stroke="#111" stroke-width="1.3" fill="none" /><path d="M401 725.5 C404 724 407 724 410 725.5 M401 729 C404 730.5 407 730.5 410 729" stroke="#111" stroke-width="1.3" fill="none" /><rect x="417.5" y="706.5" width="32" height="40" fill="none" stroke="#111" stroke-width="2"/><path d="M418 711.5 H449 M418 741.8 H449" stroke="#111" stroke-width="1.3" fill="none" stroke-dasharray="2 1.5"/><path d="M419 707 V746 M430.4 711 V742" stroke="#111" stroke-width="1.6" fill="none" /><path d="M418.5 740 C421 725 424 716 445 712" stroke="#111" stroke-width="1.2" fill="none" stroke-dasharray="3 2"/><path d="M485 712 V741 M492.4 712 V741" stroke="#111" stroke-width="1.3" fill="none" stroke-dasharray="2 2"/><path d="M482 741.1 H637.6" stroke="#111" stroke-width="1.5" fill="none" stroke-dasharray="10 2 2 2"/><path d="M503 711.6 H533 L503 741.1 H533 Z" stroke="#111" stroke-width="1.5" fill="none" /><circle cx="549.2" cy="726.5" r="9.5" fill="none" stroke="#111" stroke-width="1.4"/><path d="M539 711.6 H560 M552 713 L546 741 M569 711 L558 741 M568 711 L570 741 M541 731 L558 724" stroke="#111" stroke-width="1.3" fill="none" /><circle cx="591.4" cy="726.5" r="9.5" fill="none" stroke="#111" stroke-width="1.4"/><path d="M591.4 711.6 V741.1 M587 711.6 H602 M582 728 H601" stroke="#111" stroke-width="1.3" fill="none" /><path d="M602 711.6 H637.6 M643 711.6 H670" stroke="#e0dc6c" stroke-width="1.4" fill="none" /><path d="M622.4 711.6 L629.1 726.5 L622.4 741.1" stroke="#111" stroke-width="1.4" fill="none" /><path d="M637.5 712 V741.5" stroke="#111" stroke-width="1.4" fill="none" /><path d="M642.6 712 V741.5" stroke="#34467e" stroke-width="1.6" fill="none" /><path d="M643.5 713.8 L668.4 720.3 M643.5 740.4 L668.4 733.2" stroke="#111" stroke-width="1.3" fill="none" /><path d="M670.9 711.6 V742.2" stroke="#111" stroke-width="2.0" fill="none" /><path d="M652 724 L655 729 L658 724" stroke="#111" stroke-width="1.0" fill="none" /><path d="M289 786.7 H906" stroke="#111" stroke-width="1.5" fill="none" /><polygon points="282.5,792.7 294.5,792.7 288.5,786.2" fill="#111"/><polygon points="900,792.7 912,792.7 906,786.2" fill="#111"/><path d="M285.5 783.2 L288.8 774.3 L292.2 783.2 M286.8 780 H290.8" stroke="#111" stroke-width="1.0" fill="none" /><path d="M902.5 783.2 L905.8 774.3 L909.2 783.2 M903.8 780 H907.8" stroke="#111" stroke-width="1.0" fill="none" /><path d="M292.2 856 V901.7 H338.7" stroke="#111" stroke-width="1.6" fill="none" /><path d="M293 839.5 L299.4 845.5 L305.7 839.5 M299.4 845.5 V851.5" stroke="#111" stroke-width="1.3" fill="none" /><path d="M342.5 889 L354.5 901 M354.5 889 L342.5 901" stroke="#111" stroke-width="1.4" fill="none" /></svg><span class="t" style="left:283.0px;top:171.5px;font-size:11px;line-height:11px;font-weight:400;color:#222;transform:scaleX(1.048);-webkit-text-stroke:0;">[+][Oben][2D-Drahtkörper]</span><svg class="a" style="left:0px;top:0px;pointer-events:none" width="1778" height="1000" viewBox="0 0 1778 1000"><defs><clipPath id="vp2c"><rect x="921" y="164" width="635" height="751"/></clipPath></defs><g clip-path="url(#vp2c)"><path d="M921.0 236.6 L946.5 224.7 L1019.6 265.5 L1019.6 298.6 L946.5 256.0 L921.0 268.9" stroke="#dcdc72" stroke-width="1.2" fill="none" /><path d="M946.5 224.7 L946.5 256.0" stroke="#dcdc72" stroke-width="1.2" fill="none" /><path d="M1019.6 265.5 L921.0 297.0" stroke="#dcdc72" stroke-width="1.2" fill="none" /><path d="M1019.6 298.6 L921.0 354.8" stroke="#dcdc72" stroke-width="1.2" fill="none" /><path d="M944.0 309.0 L983.0 290.0" stroke="#dcdc72" stroke-width="1.0" fill="none" /><path d="M960.0 270.0 L983.0 261.0" stroke="#dcdc72" stroke-width="1.0" fill="none" /><path d="M921.0 279.0 L959.2 302.0 L959.2 338.6 L940.5 326.0" stroke="#1a1a22" stroke-width="1.3" fill="none" /><path d="M921.0 282.5 L956.5 303.5 L956.5 337.0" stroke="#1a1a22" stroke-width="0.9" fill="none" /><path d="M921.0 313.0 L926.0 316.0" stroke="#1a1a22" stroke-width="1.2" fill="none" /><path d="M933.0 320.0 L935.0 321.0" stroke="#1a1a22" stroke-width="1.2" fill="none" /><path d="M883.8 626.1 L919.4 605.1 L1030.3 539.6" stroke="#2b3a6c" stroke-width="1.1" fill="none" /><path d="M914.4 643.4 L950.4 622.6 L1062.7 557.8" stroke="#2b3a6c" stroke-width="1.1" fill="none" /><path d="M914.4 664.9 L950.4 643.9 L1062.7 578.6" stroke="#2b3a6c" stroke-width="1.1" fill="none" /><path d="M883.8 647.6 L919.4 626.4 L1030.3 560.3" stroke="#2b3a6c" stroke-width="1.1" fill="none" /><path d="M883.8 633.9 L919.4 612.8 L1030.3 547.1" stroke="#dcdc72" stroke-width="1.3" fill="none" /><path d="M883.8 642.0 L919.4 620.9 L1030.3 554.9" stroke="#dcdc72" stroke-width="1.3" fill="none" /><path d="M1066.3 518.3 L1183.8 448.9 L1266.3 400.9" stroke="#2b3a6c" stroke-width="1.1" fill="none" /><path d="M1099.1 536.8 L1218.1 468.1 L1300.6 420.5" stroke="#2b3a6c" stroke-width="1.1" fill="none" /><path d="M1099.1 557.3 L1218.1 488.1 L1300.6 441.6" stroke="#2b3a6c" stroke-width="1.1" fill="none" /><path d="M1066.3 538.9 L1183.8 468.9 L1266.3 421.9" stroke="#2b3a6c" stroke-width="1.1" fill="none" /><path d="M1066.3 525.7 L1183.8 456.1 L1266.3 408.4" stroke="#dcdc72" stroke-width="1.3" fill="none" /><path d="M1066.3 533.5 L1183.8 463.7 L1266.3 416.4" stroke="#dcdc72" stroke-width="1.3" fill="none" /><path d="M1301.8 380.2 L1423.2 309.6" stroke="#2b3a6c" stroke-width="1.1" fill="none" /><path d="M1336.1 400.0 L1457.6 330.0" stroke="#2b3a6c" stroke-width="1.1" fill="none" /><path d="M1336.1 421.6 L1457.6 353.2" stroke="#2b3a6c" stroke-width="1.1" fill="none" /><path d="M1301.8 401.6 L1423.2 332.4" stroke="#2b3a6c" stroke-width="1.1" fill="none" /><path d="M1301.8 387.9 L1423.2 317.8" stroke="#dcdc72" stroke-width="1.3" fill="none" /><path d="M1301.8 396.1 L1423.2 326.5" stroke="#dcdc72" stroke-width="1.3" fill="none" /><path d="M919.4 605.1 L950.4 622.6 L950.4 643.9 L919.4 626.4 Z" stroke="#1a1a22" stroke-width="1.1" fill="none" /><path d="M921.6 605.1 L952.6 622.6 L952.6 643.9 L921.6 626.4 Z" stroke="#1a1a22" stroke-width="0.9" fill="none" /><path d="M1183.8 448.9 L1218.1 468.1 L1218.1 488.1 L1183.8 468.9 Z" stroke="#1a1a22" stroke-width="1.1" fill="none" /><path d="M1186.0 448.9 L1220.3 468.1 L1220.3 488.1 L1186.0 468.9 Z" stroke="#1a1a22" stroke-width="0.9" fill="none" /><path d="M1423.2 309.6 L1457.6 330.0 L1457.6 353.2 L1423.2 332.4 Z" stroke="#1a1a22" stroke-width="1.1" fill="none" /><path d="M1425.4 309.6 L1459.8 330.0 L1459.8 353.2 L1425.4 332.4 Z" stroke="#1a1a22" stroke-width="0.9" fill="none" /><path d="M1419.2 311.9 L1453.6 332.3 L1453.6 355.5 L1419.2 334.7 Z" stroke="#1a1a22" stroke-width="0.9" fill="none" /><path d="M919.5 631.0 L947.0 617.0 L947.0 640.0 L919.5 646.0" stroke="#2346b0" stroke-width="1.0" fill="none" /><path d="M919.5 621.0 L947.0 640.0" stroke="#1a1a22" stroke-width="0.9" fill="none" /><path d="M1423.2 309.6 L1427.5 307.3 L1432.4 305.2 L1437.6 303.2 L1443.2 301.5 L1449.1 300.1 L1455.1 298.9 L1461.3 298.1 L1467.7 297.6 L1474.0 297.6 L1480.2 297.9 L1486.4 298.7 L1492.3 299.9 L1498.0 301.7 L1503.4 304.1 L1508.4 307.0 L1513.0 310.5" stroke="#2b3a6c" stroke-width="1.1" fill="none" /><path d="M1423.2 332.4 L1427.5 330.1 L1432.4 328.0 L1437.6 326.1 L1443.2 324.4 L1449.1 323.0 L1455.1 321.8 L1461.3 321.0 L1467.7 320.5 L1474.0 320.4 L1480.2 320.6 L1486.4 321.3 L1492.3 322.5 L1498.0 324.2 L1503.4 326.4 L1508.4 329.1 L1513.0 332.5" stroke="#2b3a6c" stroke-width="1.1" fill="none" /><path d="M1457.6 330.0 L1458.5 329.1 L1459.5 328.2 L1460.6 327.5 L1461.8 326.8 L1463.1 326.2 L1464.5 325.7 L1465.9 325.3 L1467.3 325.1 L1468.8 325.0 L1470.3 325.0 L1471.8 325.3 L1473.3 325.7 L1474.8 326.3 L1476.3 327.2 L1477.7 328.2 L1479.0 329.5" stroke="#2b3a6c" stroke-width="1.1" fill="none" /><path d="M1457.6 353.2 L1458.5 352.1 L1459.5 351.0 L1460.6 350.1 L1461.8 349.3 L1463.1 348.5 L1464.5 348.0 L1465.9 347.5 L1467.3 347.2 L1468.8 347.1 L1470.3 347.1 L1471.8 347.3 L1473.3 347.7 L1474.8 348.3 L1476.3 349.2 L1477.7 350.2 L1479.0 351.5" stroke="#2b3a6c" stroke-width="1.1" fill="none" /><path d="M1423.2 317.8 L1427.6 315.6 L1432.4 313.6 L1437.7 311.7 L1443.3 310.0 L1449.1 308.6 L1455.2 307.5 L1461.4 306.6 L1467.7 306.1 L1474.0 306.0 L1480.3 306.3 L1486.4 307.0 L1492.4 308.2 L1498.1 309.9 L1503.4 312.2 L1508.4 315.0 L1513.0 318.4" stroke="#dcdc72" stroke-width="1.3" fill="none" /><path d="M1423.2 326.5 L1427.6 324.3 L1432.4 322.2 L1437.7 320.3 L1443.3 318.6 L1449.1 317.2 L1455.2 316.0 L1461.4 315.2 L1467.7 314.6 L1474.0 314.5 L1480.3 314.7 L1486.4 315.4 L1492.4 316.6 L1498.1 318.3 L1503.4 320.5 L1508.4 323.3 L1513.0 326.8" stroke="#dcdc72" stroke-width="1.3" fill="none" /><path d="M1479.0 329.5 L1513.0 310.5 L1513.0 332.5 L1479.0 351.5 Z" stroke="#1a1a22" stroke-width="1.1" fill="none" /><path d="M1476.8 329.5 L1510.8 310.5 L1510.8 332.5 L1476.8 351.5 Z" stroke="#1a1a22" stroke-width="0.9" fill="none" /><path d="M1513.0 310.5 L1633.0 379.5" stroke="#2b3a6c" stroke-width="1.1" fill="none" /><path d="M1513.0 332.5 L1633.0 401.5" stroke="#2b3a6c" stroke-width="1.1" fill="none" /><path d="M1479.0 329.5 L1599.0 398.5" stroke="#2b3a6c" stroke-width="1.1" fill="none" /><path d="M1479.0 351.5 L1599.0 420.5" stroke="#2b3a6c" stroke-width="1.1" fill="none" /><path d="M1513.0 318.4 L1633.0 387.4" stroke="#dcdc72" stroke-width="1.3" fill="none" /><path d="M1513.0 326.8 L1633.0 395.8" stroke="#dcdc72" stroke-width="1.3" fill="none" /><path d="M1264.4 387.9 L1280.6 380.3 V401.4 M1265.8 388.8 V422.1 M1267.5 390.5 L1279.0 385.0 V401.0 M1268.0 391.0 V420.0 " stroke="#1a1a22" stroke-width="1.0" fill="none"/><path d="M1281.5 383.4 Q1292.0 391.0 1301.8 383.4 M1281.5 402.0 Q1292.0 410.0 1301.8 402.0 " stroke="#1a1a22" stroke-width="1.0" fill="none"/><path d="M1301.8 380.3 L1336.4 400.1 V433.8 M1301.8 380.3 V402.3 M1303.8 383.0 L1334.4 400.5 M1303.8 383.0 V402.0 " stroke="#1a1a22" stroke-width="1.0" fill="none"/><path d="M1330.0 404.0 A6 6 0 0 0 1335.0 413.0 " stroke="#1a1a22" stroke-width="0.9" fill="none"/><path d="M1266.7 403.2 L1300.0 421.2 V441.0 M1266.7 422.1 L1300.0 441.0 M1267.5 406.0 L1299.0 423.0 " stroke="#1a1a22" stroke-width="1.0" fill="none"/><path d="M1300.4 421.2 Q1311.0 413.0 1322.0 419.4 M1300.4 440.0 Q1311.0 432.0 1322.0 438.3 " stroke="#1a1a22" stroke-width="1.0" fill="none"/><path d="M1322.5 421.2 V441.0 L1335.5 434.7 V414.9 ZM1324.5 420.5 V440.0 M1326.5 419.5 V439.0 " stroke="#1a1a22" stroke-width="1.0" fill="none"/><path d="M1267.0 409.0 A5 5 0 0 1 1274.0 416.0 " stroke="#1a1a22" stroke-width="0.9" fill="none"/><path d="M1303.0 402.3 L1335.5 417.6 " stroke="#1a1a22" stroke-width="0.9" fill="none"/><path d="M1266.0 392.0 A6 6 0 0 1 1276.0 401.0 " stroke="#2346b0" stroke-width="1.0" fill="none"/><path d="M1330.0 424.0 L1333.0 430.0 M1328.0 426.0 L1334.0 425.0 " stroke="#2346b0" stroke-width="1.1" fill="none"/><path d="M1028.9 523.9 L1045.1 516.3 V537.4 M1030.3 524.8 V558.1 M1032.0 526.5 L1043.5 521.0 V537.0 M1032.5 527.0 V556.0 " stroke="#1a1a22" stroke-width="1.0" fill="none"/><path d="M1046.0 519.4 Q1056.5 527.0 1066.3 519.4 M1046.0 538.0 Q1056.5 546.0 1066.3 538.0 " stroke="#1a1a22" stroke-width="1.0" fill="none"/><path d="M1066.3 516.3 L1100.9 536.1 V569.8 M1066.3 516.3 V538.3 M1068.3 519.0 L1098.9 536.5 M1068.3 519.0 V538.0 " stroke="#1a1a22" stroke-width="1.0" fill="none"/><path d="M1094.5 540.0 A6 6 0 0 0 1099.5 549.0 " stroke="#1a1a22" stroke-width="0.9" fill="none"/><path d="M1031.2 539.2 L1064.5 557.2 V577.0 M1031.2 558.1 L1064.5 577.0 M1032.0 542.0 L1063.5 559.0 " stroke="#1a1a22" stroke-width="1.0" fill="none"/><path d="M1064.9 557.2 Q1075.5 549.0 1086.5 555.4 M1064.9 576.0 Q1075.5 568.0 1086.5 574.3 " stroke="#1a1a22" stroke-width="1.0" fill="none"/><path d="M1087.0 557.2 V577.0 L1100.0 570.7 V550.9 ZM1089.0 556.5 V576.0 M1091.0 555.5 V575.0 " stroke="#1a1a22" stroke-width="1.0" fill="none"/><path d="M1031.5 545.0 A5 5 0 0 1 1038.5 552.0 " stroke="#1a1a22" stroke-width="0.9" fill="none"/><path d="M1067.5 538.3 L1100.0 553.6 " stroke="#1a1a22" stroke-width="0.9" fill="none"/><path d="M1030.5 528.0 A6 6 0 0 1 1040.5 537.0 " stroke="#2346b0" stroke-width="1.0" fill="none"/><path d="M1094.5 560.0 L1097.5 566.0 M1092.5 562.0 L1098.5 561.0 " stroke="#2346b0" stroke-width="1.1" fill="none"/><path d="M1144.2 311.9 L1240.8 367.1" stroke="#2b3a6c" stroke-width="1.1" fill="none" /><path d="M1136.2 325.7 L1232.8 380.9" stroke="#2b3a6c" stroke-width="1.1" fill="none" /><path d="M1140.2 318.8 L1236.8 374.0" stroke="#c8782f" stroke-width="1.0" fill="none" /><path d="M1140.1 320.1 A6.4 8.4 29.7 0 1 1151.2 326.5" fill="none" stroke="#2b3a6c" stroke-width="1.0"/><ellipse cx="1149.3" cy="328.1" rx="1.4" ry="3.2" transform="rotate(49.7 1149.3 328.1)" fill="none" stroke="#2b3a6c" stroke-width="0.9"/><path d="M1152.2 327.0 A6.4 8.4 29.7 0 1 1163.3 333.4" fill="none" stroke="#2b3a6c" stroke-width="1.0"/><ellipse cx="1161.4" cy="335.0" rx="1.4" ry="3.2" transform="rotate(49.7 1161.4 335.0)" fill="none" stroke="#2b3a6c" stroke-width="0.9"/><path d="M1164.2 333.9 A6.4 8.4 29.7 0 1 1175.3 340.3" fill="none" stroke="#2b3a6c" stroke-width="1.0"/><ellipse cx="1173.4" cy="341.9" rx="1.4" ry="3.2" transform="rotate(49.7 1173.4 341.9)" fill="none" stroke="#2b3a6c" stroke-width="0.9"/><path d="M1176.3 340.8 A6.4 8.4 29.7 0 1 1187.4 347.2" fill="none" stroke="#2b3a6c" stroke-width="1.0"/><ellipse cx="1185.5" cy="348.8" rx="1.4" ry="3.2" transform="rotate(49.7 1185.5 348.8)" fill="none" stroke="#2b3a6c" stroke-width="0.9"/><path d="M1188.4 347.7 A6.4 8.4 29.7 0 1 1199.5 354.1" fill="none" stroke="#2b3a6c" stroke-width="1.0"/><ellipse cx="1197.6" cy="355.7" rx="1.4" ry="3.2" transform="rotate(49.7 1197.6 355.7)" fill="none" stroke="#2b3a6c" stroke-width="0.9"/><path d="M1200.5 354.6 A6.4 8.4 29.7 0 1 1211.6 361.0" fill="none" stroke="#2b3a6c" stroke-width="1.0"/><ellipse cx="1209.7" cy="362.6" rx="1.4" ry="3.2" transform="rotate(49.7 1209.7 362.6)" fill="none" stroke="#2b3a6c" stroke-width="0.9"/><path d="M1212.5 361.5 A6.4 8.4 29.7 0 1 1223.6 367.9" fill="none" stroke="#2b3a6c" stroke-width="1.0"/><ellipse cx="1221.7" cy="369.5" rx="1.4" ry="3.2" transform="rotate(49.7 1221.7 369.5)" fill="none" stroke="#2b3a6c" stroke-width="0.9"/><path d="M1224.6 368.4 A6.4 8.4 29.7 0 1 1235.7 374.8" fill="none" stroke="#2b3a6c" stroke-width="1.0"/><ellipse cx="1233.8" cy="376.4" rx="1.4" ry="3.2" transform="rotate(49.7 1233.8 376.4)" fill="none" stroke="#2b3a6c" stroke-width="0.9"/><ellipse cx="1140.2" cy="318.8" rx="4.2" ry="8.3" transform="rotate(1.7 1140.2 318.8)" fill="none" stroke="#2b3a6c" stroke-width="1.2"/><ellipse cx="1236.8" cy="374.0" rx="4.2" ry="8.3" transform="rotate(1.7 1236.8 374.0)" fill="none" stroke="#2b3a6c" stroke-width="1.2"/><path d="M1241.6 367.0 L1281.0 381.0" stroke="#2346b0" stroke-width="1.2" fill="none" /><path d="M1234.0 380.0 L1267.0 420.0" stroke="#2b3a6c" stroke-width="1.0" fill="none" /><path d="M1241.0 369.0 L1268.0 392.0" stroke="#2346b0" stroke-width="1.0" fill="none" /><path d="M1236.0 381.0 L1281.0 400.0" stroke="#2b3a6c" stroke-width="0.9" fill="none" /><path d="M1131.2 311.6 L1148.0 303.8 L1242.2 357.2 L1236.8 360.8" stroke="#dcdc72" stroke-width="1.2" fill="none" /><path d="M1369.9 441.0 L1489.9 509.0" stroke="#2b3a6c" stroke-width="1.1" fill="none" /><path d="M1362.1 455.0 L1482.1 523.0" stroke="#2b3a6c" stroke-width="1.1" fill="none" /><path d="M1366.0 448.0 L1486.0 516.0" stroke="#c8782f" stroke-width="1.0" fill="none" /><path d="M1365.3 449.0 A6.4 8.4 29.5 0 1 1376.4 455.3" fill="none" stroke="#2b3a6c" stroke-width="1.0"/><ellipse cx="1374.0" cy="456.7" rx="1.4" ry="3.2" transform="rotate(49.5 1374.0 456.7)" fill="none" stroke="#2b3a6c" stroke-width="0.9"/><path d="M1376.2 455.2 A6.4 8.4 29.5 0 1 1387.3 461.5" fill="none" stroke="#2b3a6c" stroke-width="1.0"/><ellipse cx="1385.0" cy="462.9" rx="1.4" ry="3.2" transform="rotate(49.5 1385.0 462.9)" fill="none" stroke="#2b3a6c" stroke-width="0.9"/><path d="M1387.1 461.3 A6.4 8.4 29.5 0 1 1398.2 467.7" fill="none" stroke="#2b3a6c" stroke-width="1.0"/><ellipse cx="1395.9" cy="469.1" rx="1.4" ry="3.2" transform="rotate(49.5 1395.9 469.1)" fill="none" stroke="#2b3a6c" stroke-width="0.9"/><path d="M1398.0 467.5 A6.4 8.4 29.5 0 1 1409.2 473.8" fill="none" stroke="#2b3a6c" stroke-width="1.0"/><ellipse cx="1406.8" cy="475.2" rx="1.4" ry="3.2" transform="rotate(49.5 1406.8 475.2)" fill="none" stroke="#2b3a6c" stroke-width="0.9"/><path d="M1408.9 473.7 A6.4 8.4 29.5 0 1 1420.1 480.0" fill="none" stroke="#2b3a6c" stroke-width="1.0"/><ellipse cx="1417.7" cy="481.4" rx="1.4" ry="3.2" transform="rotate(49.5 1417.7 481.4)" fill="none" stroke="#2b3a6c" stroke-width="0.9"/><path d="M1419.8 479.9 A6.4 8.4 29.5 0 1 1431.0 486.2" fill="none" stroke="#2b3a6c" stroke-width="1.0"/><ellipse cx="1428.6" cy="487.6" rx="1.4" ry="3.2" transform="rotate(49.5 1428.6 487.6)" fill="none" stroke="#2b3a6c" stroke-width="0.9"/><path d="M1430.7 486.1 A6.4 8.4 29.5 0 1 1441.9 492.4" fill="none" stroke="#2b3a6c" stroke-width="1.0"/><ellipse cx="1439.5" cy="493.8" rx="1.4" ry="3.2" transform="rotate(49.5 1439.5 493.8)" fill="none" stroke="#2b3a6c" stroke-width="0.9"/><path d="M1441.7 492.3 A6.4 8.4 29.5 0 1 1452.8 498.6" fill="none" stroke="#2b3a6c" stroke-width="1.0"/><ellipse cx="1450.4" cy="500.0" rx="1.4" ry="3.2" transform="rotate(49.5 1450.4 500.0)" fill="none" stroke="#2b3a6c" stroke-width="0.9"/><path d="M1452.6 498.4 A6.4 8.4 29.5 0 1 1463.7 504.7" fill="none" stroke="#2b3a6c" stroke-width="1.0"/><ellipse cx="1461.3" cy="506.2" rx="1.4" ry="3.2" transform="rotate(49.5 1461.3 506.2)" fill="none" stroke="#2b3a6c" stroke-width="0.9"/><path d="M1463.5 504.6 A6.4 8.4 29.5 0 1 1474.6 510.9" fill="none" stroke="#2b3a6c" stroke-width="1.0"/><ellipse cx="1472.2" cy="512.3" rx="1.4" ry="3.2" transform="rotate(49.5 1472.2 512.3)" fill="none" stroke="#2b3a6c" stroke-width="0.9"/><path d="M1474.4 510.8 A6.4 8.4 29.5 0 1 1485.5 517.1" fill="none" stroke="#2b3a6c" stroke-width="1.0"/><ellipse cx="1483.1" cy="518.5" rx="1.4" ry="3.2" transform="rotate(49.5 1483.1 518.5)" fill="none" stroke="#2b3a6c" stroke-width="0.9"/><ellipse cx="1366.0" cy="448.0" rx="4.2" ry="8.3" transform="rotate(1.5 1366.0 448.0)" fill="none" stroke="#2b3a6c" stroke-width="1.2"/><ellipse cx="1486.0" cy="516.0" rx="4.2" ry="8.3" transform="rotate(1.5 1486.0 516.0)" fill="none" stroke="#2b3a6c" stroke-width="1.2"/><path d="M1336.5 416.0 L1370.0 441.0" stroke="#2b3a6c" stroke-width="1.0" fill="none" /><path d="M1323.0 441.0 L1360.0 455.0" stroke="#2346b0" stroke-width="1.2" fill="none" /><path d="M1336.0 434.0 L1362.0 452.0" stroke="#2346b0" stroke-width="1.0" fill="none" /><path d="M1355.0 466.0 L1362.0 462.0 L1490.0 528.0 L1484.0 531.0" stroke="#dcdc72" stroke-width="1.2" fill="none" /><path d="M909.1 445.1 L1006.1 503.1" stroke="#2b3a6c" stroke-width="1.1" fill="none" /><path d="M900.9 458.9 L997.9 516.9" stroke="#2b3a6c" stroke-width="1.1" fill="none" /><path d="M905.0 452.0 L1002.0 510.0" stroke="#c8782f" stroke-width="1.0" fill="none" /><path d="M904.3 453.0 A6.4 8.4 30.9 0 1 915.3 459.5" fill="none" stroke="#2b3a6c" stroke-width="1.0"/><ellipse cx="912.9" cy="460.9" rx="1.4" ry="3.2" transform="rotate(50.9 912.9 460.9)" fill="none" stroke="#2b3a6c" stroke-width="0.9"/><path d="M915.1 459.4 A6.4 8.4 30.9 0 1 926.0 466.0" fill="none" stroke="#2b3a6c" stroke-width="1.0"/><ellipse cx="923.6" cy="467.3" rx="1.4" ry="3.2" transform="rotate(50.9 923.6 467.3)" fill="none" stroke="#2b3a6c" stroke-width="0.9"/><path d="M925.8 465.9 A6.4 8.4 30.9 0 1 936.8 472.4" fill="none" stroke="#2b3a6c" stroke-width="1.0"/><ellipse cx="934.4" cy="473.8" rx="1.4" ry="3.2" transform="rotate(50.9 934.4 473.8)" fill="none" stroke="#2b3a6c" stroke-width="0.9"/><path d="M936.6 472.3 A6.4 8.4 30.9 0 1 947.6 478.9" fill="none" stroke="#2b3a6c" stroke-width="1.0"/><ellipse cx="945.2" cy="480.2" rx="1.4" ry="3.2" transform="rotate(50.9 945.2 480.2)" fill="none" stroke="#2b3a6c" stroke-width="0.9"/><path d="M947.4 478.7 A6.4 8.4 30.9 0 1 958.4 485.3" fill="none" stroke="#2b3a6c" stroke-width="1.0"/><ellipse cx="956.0" cy="486.7" rx="1.4" ry="3.2" transform="rotate(50.9 956.0 486.7)" fill="none" stroke="#2b3a6c" stroke-width="0.9"/><path d="M958.2 485.2 A6.4 8.4 30.9 0 1 969.2 491.8" fill="none" stroke="#2b3a6c" stroke-width="1.0"/><ellipse cx="966.7" cy="493.1" rx="1.4" ry="3.2" transform="rotate(50.9 966.7 493.1)" fill="none" stroke="#2b3a6c" stroke-width="0.9"/><path d="M968.9 491.6 A6.4 8.4 30.9 0 1 979.9 498.2" fill="none" stroke="#2b3a6c" stroke-width="1.0"/><ellipse cx="977.5" cy="499.6" rx="1.4" ry="3.2" transform="rotate(50.9 977.5 499.6)" fill="none" stroke="#2b3a6c" stroke-width="0.9"/><path d="M979.7 498.1 A6.4 8.4 30.9 0 1 990.7 504.6" fill="none" stroke="#2b3a6c" stroke-width="1.0"/><ellipse cx="988.3" cy="506.0" rx="1.4" ry="3.2" transform="rotate(50.9 988.3 506.0)" fill="none" stroke="#2b3a6c" stroke-width="0.9"/><path d="M990.5 504.5 A6.4 8.4 30.9 0 1 1001.5 511.1" fill="none" stroke="#2b3a6c" stroke-width="1.0"/><ellipse cx="999.1" cy="512.4" rx="1.4" ry="3.2" transform="rotate(50.9 999.1 512.4)" fill="none" stroke="#2b3a6c" stroke-width="0.9"/><ellipse cx="905.0" cy="452.0" rx="4.2" ry="8.3" transform="rotate(2.9 905.0 452.0)" fill="none" stroke="#2b3a6c" stroke-width="1.2"/><ellipse cx="1002.0" cy="510.0" rx="4.2" ry="8.3" transform="rotate(2.9 1002.0 510.0)" fill="none" stroke="#2b3a6c" stroke-width="1.2"/><path d="M1006.0 504.0 L1046.0 516.0" stroke="#2346b0" stroke-width="1.2" fill="none" /><path d="M998.0 517.0 L1031.0 558.0" stroke="#2b3a6c" stroke-width="1.0" fill="none" /><path d="M1006.0 506.0 L1032.0 530.0" stroke="#2346b0" stroke-width="1.0" fill="none" /><path d="M921.0 486.0 L992.0 523.0 L985.0 527.0" stroke="#dcdc72" stroke-width="1.2" fill="none" /><path d="M1135.6 578.0 L1253.9 645.0" stroke="#2b3a6c" stroke-width="1.1" fill="none" /><path d="M1127.8 592.0 L1246.1 659.0" stroke="#2b3a6c" stroke-width="1.1" fill="none" /><path d="M1131.7 585.0 L1250.0 652.0" stroke="#c8782f" stroke-width="1.0" fill="none" /><path d="M1131.5 586.2 A6.4 8.4 29.5 0 1 1142.6 592.5" fill="none" stroke="#2b3a6c" stroke-width="1.0"/><ellipse cx="1140.6" cy="594.2" rx="1.4" ry="3.2" transform="rotate(49.5 1140.6 594.2)" fill="none" stroke="#2b3a6c" stroke-width="0.9"/><path d="M1143.3 592.9 A6.4 8.4 29.5 0 1 1154.4 599.2" fill="none" stroke="#2b3a6c" stroke-width="1.0"/><ellipse cx="1152.4" cy="600.9" rx="1.4" ry="3.2" transform="rotate(49.5 1152.4 600.9)" fill="none" stroke="#2b3a6c" stroke-width="0.9"/><path d="M1155.1 599.6 A6.4 8.4 29.5 0 1 1166.3 605.9" fill="none" stroke="#2b3a6c" stroke-width="1.0"/><ellipse cx="1164.2" cy="607.6" rx="1.4" ry="3.2" transform="rotate(49.5 1164.2 607.6)" fill="none" stroke="#2b3a6c" stroke-width="0.9"/><path d="M1166.9 606.3 A6.4 8.4 29.5 0 1 1178.1 612.6" fill="none" stroke="#2b3a6c" stroke-width="1.0"/><ellipse cx="1176.1" cy="614.3" rx="1.4" ry="3.2" transform="rotate(49.5 1176.1 614.3)" fill="none" stroke="#2b3a6c" stroke-width="0.9"/><path d="M1178.8 613.0 A6.4 8.4 29.5 0 1 1189.9 619.3" fill="none" stroke="#2b3a6c" stroke-width="1.0"/><ellipse cx="1187.9" cy="621.0" rx="1.4" ry="3.2" transform="rotate(49.5 1187.9 621.0)" fill="none" stroke="#2b3a6c" stroke-width="0.9"/><path d="M1190.6 619.7 A6.4 8.4 29.5 0 1 1201.7 626.0" fill="none" stroke="#2b3a6c" stroke-width="1.0"/><ellipse cx="1199.7" cy="627.7" rx="1.4" ry="3.2" transform="rotate(49.5 1199.7 627.7)" fill="none" stroke="#2b3a6c" stroke-width="0.9"/><path d="M1202.4 626.4 A6.4 8.4 29.5 0 1 1213.6 632.7" fill="none" stroke="#2b3a6c" stroke-width="1.0"/><ellipse cx="1211.6" cy="634.4" rx="1.4" ry="3.2" transform="rotate(49.5 1211.6 634.4)" fill="none" stroke="#2b3a6c" stroke-width="0.9"/><path d="M1214.3 633.1 A6.4 8.4 29.5 0 1 1225.4 639.4" fill="none" stroke="#2b3a6c" stroke-width="1.0"/><ellipse cx="1223.4" cy="641.1" rx="1.4" ry="3.2" transform="rotate(49.5 1223.4 641.1)" fill="none" stroke="#2b3a6c" stroke-width="0.9"/><path d="M1226.1 639.8 A6.4 8.4 29.5 0 1 1237.2 646.1" fill="none" stroke="#2b3a6c" stroke-width="1.0"/><ellipse cx="1235.2" cy="647.8" rx="1.4" ry="3.2" transform="rotate(49.5 1235.2 647.8)" fill="none" stroke="#2b3a6c" stroke-width="0.9"/><path d="M1237.9 646.5 A6.4 8.4 29.5 0 1 1249.1 652.8" fill="none" stroke="#2b3a6c" stroke-width="1.0"/><ellipse cx="1247.0" cy="654.5" rx="1.4" ry="3.2" transform="rotate(49.5 1247.0 654.5)" fill="none" stroke="#2b3a6c" stroke-width="0.9"/><ellipse cx="1131.7" cy="585.0" rx="4.2" ry="8.3" transform="rotate(1.5 1131.7 585.0)" fill="none" stroke="#2b3a6c" stroke-width="1.2"/><ellipse cx="1250.0" cy="652.0" rx="4.2" ry="8.3" transform="rotate(1.5 1250.0 652.0)" fill="none" stroke="#2b3a6c" stroke-width="1.2"/><path d="M1101.0 552.0 L1135.0 577.0" stroke="#2b3a6c" stroke-width="1.0" fill="none" /><path d="M1087.5 577.0 L1125.0 591.0" stroke="#2346b0" stroke-width="1.2" fill="none" /><path d="M1100.0 570.0 L1128.0 588.0" stroke="#2346b0" stroke-width="1.0" fill="none" /><path d="M1128.0 574.0 L1134.0 570.0 L1256.0 638.0 L1250.0 641.0" stroke="#dcdc72" stroke-width="1.2" fill="none" /><path d="M909.3 720.3 L1017.3 780.3" stroke="#2b3a6c" stroke-width="1.1" fill="none" /><path d="M900.7 735.7 L1008.7 795.7" stroke="#2b3a6c" stroke-width="1.1" fill="none" /><path d="M905.0 728.0 L1013.0 788.0" stroke="#c8782f" stroke-width="1.0" fill="none" /><path d="M904.8 729.4 A6.4 9.2 29.1 0 1 916.0 735.6" fill="none" stroke="#2b3a6c" stroke-width="1.0"/><ellipse cx="913.9" cy="737.5" rx="1.4" ry="3.2" transform="rotate(49.1 913.9 737.5)" fill="none" stroke="#2b3a6c" stroke-width="0.9"/><path d="M916.8 736.0 A6.4 9.2 29.1 0 1 928.0 742.3" fill="none" stroke="#2b3a6c" stroke-width="1.0"/><ellipse cx="925.9" cy="744.1" rx="1.4" ry="3.2" transform="rotate(49.1 925.9 744.1)" fill="none" stroke="#2b3a6c" stroke-width="0.9"/><path d="M928.8 742.7 A6.4 9.2 29.1 0 1 940.0 748.9" fill="none" stroke="#2b3a6c" stroke-width="1.0"/><ellipse cx="937.9" cy="750.8" rx="1.4" ry="3.2" transform="rotate(49.1 937.9 750.8)" fill="none" stroke="#2b3a6c" stroke-width="0.9"/><path d="M940.8 749.4 A6.4 9.2 29.1 0 1 952.0 755.6" fill="none" stroke="#2b3a6c" stroke-width="1.0"/><ellipse cx="949.9" cy="757.5" rx="1.4" ry="3.2" transform="rotate(49.1 949.9 757.5)" fill="none" stroke="#2b3a6c" stroke-width="0.9"/><path d="M952.8 756.0 A6.4 9.2 29.1 0 1 964.0 762.3" fill="none" stroke="#2b3a6c" stroke-width="1.0"/><ellipse cx="961.9" cy="764.1" rx="1.4" ry="3.2" transform="rotate(49.1 961.9 764.1)" fill="none" stroke="#2b3a6c" stroke-width="0.9"/><path d="M964.8 762.7 A6.4 9.2 29.1 0 1 976.0 768.9" fill="none" stroke="#2b3a6c" stroke-width="1.0"/><ellipse cx="973.9" cy="770.8" rx="1.4" ry="3.2" transform="rotate(49.1 973.9 770.8)" fill="none" stroke="#2b3a6c" stroke-width="0.9"/><path d="M976.8 769.4 A6.4 9.2 29.1 0 1 988.0 775.6" fill="none" stroke="#2b3a6c" stroke-width="1.0"/><ellipse cx="985.9" cy="777.5" rx="1.4" ry="3.2" transform="rotate(49.1 985.9 777.5)" fill="none" stroke="#2b3a6c" stroke-width="0.9"/><path d="M988.8 776.0 A6.4 9.2 29.1 0 1 1000.0 782.3" fill="none" stroke="#2b3a6c" stroke-width="1.0"/><ellipse cx="997.9" cy="784.1" rx="1.4" ry="3.2" transform="rotate(49.1 997.9 784.1)" fill="none" stroke="#2b3a6c" stroke-width="0.9"/><path d="M1000.8 782.7 A6.4 9.2 29.1 0 1 1012.0 788.9" fill="none" stroke="#2b3a6c" stroke-width="1.0"/><ellipse cx="1009.9" cy="790.8" rx="1.4" ry="3.2" transform="rotate(49.1 1009.9 790.8)" fill="none" stroke="#2b3a6c" stroke-width="0.9"/><ellipse cx="905.0" cy="728.0" rx="4.2" ry="9.1" transform="rotate(1.1 905.0 728.0)" fill="none" stroke="#2b3a6c" stroke-width="1.2"/><ellipse cx="1013.0" cy="788.0" rx="4.2" ry="9.1" transform="rotate(1.1 1013.0 788.0)" fill="none" stroke="#2b3a6c" stroke-width="1.2"/><path d="M921.0 756.0 L1004.0 802.0 L1020.6 793.6" stroke="#dcdc72" stroke-width="1.2" fill="none" /><path d="M1166.0 909.2 L1556.0 684.2" stroke="#dcdc72" stroke-width="1.2" fill="none" /><path d="M1215.0 914.1 L1556.0 717.4" stroke="#dcdc72" stroke-width="1.2" fill="none" /><path d="M1259.5 913.9 L1556.0 742.9" stroke="#dcdc72" stroke-width="1.2" fill="none" /><path d="M1315.0 907.4 L1556.0 768.4" stroke="#dcdc72" stroke-width="1.2" fill="none" /><path d="M1358.5 918.0 L1556.0 804.1" stroke="#dcdc72" stroke-width="1.2" fill="none" /><path d="M1049.0 913.6 L1111.9 877.7 L1174.7 913.6" stroke="#dcdc72" stroke-width="1.2" fill="none" /><path d="M1111.9 877.7 L1111.9 915.0" stroke="#dcdc72" stroke-width="1.2" fill="none" /><path d="M1104.0 915.0 L1112.0 908.0 L1121.0 915.0" stroke="#1a1a22" stroke-width="1.2" fill="none" /><path d="M1157.0 915.0 L1157.0 908.0 L1168.0 915.0" stroke="#1a1a22" stroke-width="1.2" fill="none" /><path d="M1394.2 773.5 L1472.0 818.1 L1472.0 855.1 L1394.2 810.5 Z" stroke="#1a1a22" stroke-width="1.1" fill="none" /><path d="M1396.2 776.5 L1470.0 820.3 L1470.0 852.6 L1396.2 808.7 Z" stroke="#1a1a22" stroke-width="0.9" fill="none" /><path d="M1275.6 841.6 L1353.4 885.7 L1353.4 922.7 L1275.6 878.6 Z" stroke="#1a1a22" stroke-width="1.1" fill="none" /><path d="M1277.6 844.6 L1351.4 887.9 L1351.4 920.2 L1277.6 876.8 Z" stroke="#1a1a22" stroke-width="0.9" fill="none" /><path d="M1511.5 705.9 L1589.3 750.5 L1589.3 787.5 L1511.5 742.9 Z" stroke="#1a1a22" stroke-width="1.1" fill="none" /><path d="M1513.5 708.9 L1587.3 752.7 L1587.3 785.0 L1513.5 741.1 Z" stroke="#1a1a22" stroke-width="0.9" fill="none" /><path d="M1425 662.5 V677 L1428.5 674 L1431 679.5 L1433 678.5 L1430.5 673.5 L1435.5 673.5 Z" fill="#f4f4f6" stroke="#555" stroke-width="0.9"/><path d="M1457.5 671.5 V700 L1465 693.5 L1470.5 706 L1476 703.5 L1470.5 691.5 L1480 691.5 Z" fill="#d8d8dc" stroke="#111" stroke-width="2"/></g><rect x="1497.5" y="178" width="10" height="3" fill="none" stroke="#9a9aa6" stroke-width="1"/><rect x="1517.5" y="174.5" width="8" height="8" fill="none" stroke="#777" stroke-width="1"/><rect x="1519.5" y="172.5" width="8" height="8" fill="none" stroke="#999" stroke-width="0.8"/><path d="M1536.5 173.5 L1544 181 M1544 173.5 L1536.5 181" stroke="#777" stroke-width="1.4"/></svg><div class="a" style="left:1556px;top:164px;width:222px;height:784px;background:#5c6b94;"></div><div class="a" style="left:1556px;top:164px;width:222px;height:2px;background:#47546f;"></div><div class="a" style="left:1556px;top:166px;width:222px;height:59px;background:#121a2d;"></div><div class="a" style="left:1731px;top:194px;width:47px;height:31px;background:#5c6b94;"></div><div class="a" style="left:1731px;top:193px;width:47px;height:2px;background:#8fd0e8;"></div><div class="a" style="left:1567px;top:272px;width:200px;height:668px;background:#2e3a56;"></div><div class="a" style="left:1567px;top:248px;width:28px;height:24px;background:#2e3a56;"></div><div class="a" style="left:1567px;top:247px;width:28px;height:2.5px;background:#8fd0e8;"></div><div class="a" style="left:1567px;top:397px;width:200px;height:28px;background:#2b3652;"></div><div class="a" style="left:1572.5px;top:425px;width:188px;height:178px;background:#34405d;"></div><div class="a" style="left:1585px;top:425.5px;width:172px;height:131px;background:#5d6b92;border:1px solid #26304a"></div><div class="a" style="left:1587px;top:427px;width:169px;height:12.5px;background:#19a2e6;"></div><div class="a" style="left:1585px;top:559.5px;width:172px;height:18.5px;background:#55638b;"></div><div class="a" style="left:1572.5px;top:673.5px;width:188px;height:50px;background:#35415d;"></div><div class="a" style="left:1690.5px;top:678.5px;width:42px;height:17px;background:#55638b;border-radius:2px"></div><div class="a" style="left:1690.5px;top:700.5px;width:42px;height:18px;background:#55638b;border-radius:2px"></div><div class="a" style="left:1572.8px;top:749.3px;width:188px;height:50.4px;background:#35415d;"></div><div class="a" style="left:1690px;top:754px;width:43px;height:17.6px;background:#55638b;border-radius:2px"></div><div class="a" style="left:1690px;top:776.4px;width:43px;height:18px;background:#55638b;border-radius:2px"></div><svg class="a" style="left:1556px;top:160px;" width="222" height="790" viewBox="1556 160 222 790"><path d="M1566 173 L1571 171 L1577 174 V185 L1574 183 V178 L1570 176 V186 L1566 184 Z" fill="#f0f0f5"/><path d="M1569 203.5 H1589 M1569 210.5 H1589 M1569 217.5 H1589" stroke="#f2f2f6" stroke-width="2.4"/><path d="M1611.5 203 H1624 M1611.5 203 V220.5 H1632 V208" stroke="#f2f2f6" stroke-width="1.8" fill="none"/><path d="M1616 216 L1617 211 L1630 199 L1634 203 L1621 215 Z" fill="none" stroke="#f2f2f6" stroke-width="1.8"/><rect x="1657" y="200" width="17" height="21" fill="none" stroke="#f2f2f6" stroke-width="1.6"/><rect x="1660" y="203" width="11" height="4" fill="#f2f2f6"/><path d="M1660 211 h3 M1664.5 211 h3 M1669 211 h2.5 M1660 215.5 h3 M1664.5 215.5 h3 M1669 215.5 h2.5" stroke="#f2f2f6" stroke-width="2.2"/><path d="M1700.5 200 H1710 L1718 208 V220.5 H1700.5 Z" fill="none" stroke="#f2f2f6" stroke-width="1.6"/><path d="M1710 200 V208 H1718 Z" fill="#f2f2f6"/><path d="M1745 200 H1743.5 V205 M1761 200 H1764.5 V205 M1743.5 215 V220 H1748 M1764.5 215 V220 H1760" stroke="#eef" stroke-width="1.6" fill="none"/><rect x="1748" y="208" width="3" height="3" fill="#eef"/><rect x="1753" y="208" width="3" height="3" fill="#eef"/><rect x="1758" y="208" width="3" height="3" fill="#eef"/><path d="M1573 257.5 V253.5 H1577 M1583 253.5 H1587 V257.5 M1587 263.5 V267.5 H1583 M1577 267.5 H1573 V263.5" stroke="#eef" stroke-width="1.4" fill="none"/><rect x="1575.5" y="256" width="9" height="9" fill="#a8b2c8"/><path d="M1600 257.5 V253.5 H1604 M1610 253.5 H1614 V257.5 M1614 263.5 V267.5 H1610 M1604 267.5 H1600 V263.5" stroke="#eef" stroke-width="1.4" fill="none"/><rect x="1602.5" y="256" width="9" height="9" fill="#8d98b8"/><circle cx="1612" cy="265" r="3.6" fill="#5ab8e0" stroke="#2e3a56" stroke-width="0.8"/><circle cx="1612" cy="265" r="1.2" fill="#2e3a56"/><rect x="1629" y="253" width="10" height="15" fill="#dfe3ec"/><rect x="1631" y="255" width="6" height="4.5" fill="#5ab8e0"/><path d="M1631 262 H1637 M1631 264.5 H1634" stroke="#556" stroke-width="0.8"/><path d="M1636 267 L1643 259" stroke="#eef" stroke-width="2.6"/><path d="M1657 268 L1666 259" stroke="#eef" stroke-width="2.8" stroke-linecap="round"/><path d="M1664.5 255 A5 5 0 1 0 1670.5 262 L1667.5 262 L1665.5 257.5 Z" fill="#eef"/><rect x="1684" y="253.5" width="15" height="5" fill="#dfe3ec"/><path d="M1686.5 253.5 V256 M1689 253.5 V255 M1691.5 253.5 V256 M1694 253.5 V255 M1696.5 253.5 V256" stroke="#2e3a56" stroke-width="0.8"/><path d="M1689 268 L1697 260" stroke="#eef" stroke-width="2.5"/><polygon points="1726.4,259.1 1726.4,261.9 1724.2,262.2 1724.0,262.6 1725.3,264.4 1723.4,266.3 1721.6,265.0 1721.2,265.2 1720.9,267.4 1718.1,267.4 1717.8,265.2 1717.4,265.0 1715.6,266.3 1713.7,264.4 1715.0,262.6 1714.8,262.2 1712.6,261.9 1712.6,259.1 1714.8,258.8 1715.0,258.4 1713.7,256.6 1715.6,254.7 1717.4,256.0 1717.8,255.8 1718.1,253.6 1720.9,253.6 1721.2,255.8 1721.6,256.0 1723.4,254.7 1725.3,256.6 1724.0,258.4 1724.2,258.8" fill="#eef"/><circle cx="1719.5" cy="260.5" r="2.2" fill="#5c6b94"/><path d="M1573.0 301.5 L1577.0 297.5 H1588.0 V308.5 L1584.0 312.5 H1573.0 Z" fill="#1d2740"/><rect x="1577.0" y="297.5" width="11" height="11" fill="#a9e6f0"/><path d="M1573.0 301.5 L1577.0 297.5 H1588.0 V308.5 L1584.0 312.5 H1573.0 Z" fill="none" stroke="#f2f4f8" stroke-width="1.5"/><path d="M1573.0 301.5 H1584.0 V312.5 M1584.0 301.5 L1588.0 297.5 M1577.0 297.5 V308.5 H1588.0 M1577.0 308.5 L1573.0 312.5" fill="none" stroke="#f2f4f8" stroke-width="1.1"/><path d="M1599.0 301.5 L1603.0 297.5 H1614.0 V308.5 L1610.0 312.5 H1599.0 Z" fill="#1d2740"/><path d="M1599.0 301.5 L1603.0 297.5 V308.5 L1599.0 312.5 Z" fill="#a9e6f0"/><path d="M1603.0 297.5 H1614.0 L1610.0 301.5 H1599.0 Z" fill="#a9e6f0"/><path d="M1599.0 301.5 L1603.0 297.5 H1614.0 V308.5 L1610.0 312.5 H1599.0 Z" fill="none" stroke="#f2f4f8" stroke-width="1.5"/><path d="M1599.0 301.5 H1610.0 V312.5 M1610.0 301.5 L1614.0 297.5 M1603.0 297.5 V308.5 H1614.0 M1603.0 308.5 L1599.0 312.5" fill="none" stroke="#f2f4f8" stroke-width="1.1"/><path d="M1625.0 301.5 L1629.0 297.5 H1640.0 V308.5 L1636.0 312.5 H1625.0 Z" fill="#1d2740"/><path d="M1636.0 301.5 L1640.0 297.5 V308.5 L1636.0 312.5 Z" fill="#a9e6f0"/><path d="M1625.0 301.5 L1629.0 297.5 H1640.0 V308.5 L1636.0 312.5 H1625.0 Z" fill="none" stroke="#f2f4f8" stroke-width="1.5"/><path d="M1625.0 301.5 H1636.0 V312.5 M1636.0 301.5 L1640.0 297.5 M1629.0 297.5 V308.5 H1640.0 M1629.0 308.5 L1625.0 312.5" fill="none" stroke="#f2f4f8" stroke-width="1.1"/><path d="M1651.0 301.5 L1655.0 297.5 H1666.0 V308.5 L1662.0 312.5 H1651.0 Z" fill="#1d2740"/><rect x="1651.0" y="301.5" width="11" height="11" fill="#a9e6f0"/><path d="M1651.0 301.5 L1655.0 297.5 H1666.0 V308.5 L1662.0 312.5 H1651.0 Z" fill="none" stroke="#f2f4f8" stroke-width="1.5"/><path d="M1651.0 301.5 H1662.0 V312.5 M1662.0 301.5 L1666.0 297.5 M1655.0 297.5 V308.5 H1666.0 M1655.0 308.5 L1651.0 312.5" fill="none" stroke="#f2f4f8" stroke-width="1.1"/><path d="M1677.0 301.5 L1681.0 297.5 H1692.0 V308.5 L1688.0 312.5 H1677.0 Z" fill="#1d2740"/><path d="M1677.0 301.5 L1681.0 297.5 H1692.0 L1688.0 301.5 Z" fill="#a9e6f0"/><path d="M1677.0 301.5 H1688.0 V312.5 H1677.0 Z" fill="#a9e6f0"/><path d="M1677.0 301.5 L1681.0 297.5 H1692.0 V308.5 L1688.0 312.5 H1677.0 Z" fill="none" stroke="#f2f4f8" stroke-width="1.5"/><path d="M1677.0 301.5 H1688.0 V312.5 M1688.0 301.5 L1692.0 297.5 M1681.0 297.5 V308.5 H1692.0 M1681.0 308.5 L1677.0 312.5" fill="none" stroke="#f2f4f8" stroke-width="1.1"/><rect x="1704" y="298" width="12" height="11" fill="#9aa3bb" stroke="#eef" stroke-width="1"/><circle cx="1713.5" cy="309" r="5" fill="#b8bccb" stroke="#eef" stroke-width="1.2"/><path d="M1729 301 L1733 297 H1744 V308 L1740 312 H1729 Z" fill="#5fd0e6" stroke="#eef" stroke-width="1"/><path d="M1731.5 303 H1738.5 M1731.5 306 H1738.5 M1731.5 309 H1738.5" stroke="#d33" stroke-width="1.2"/><path d="M1731.5 306 H1738.5" stroke="#fff" stroke-width="1"/><path d="M1731.5 309 H1738.5" stroke="#4c4" stroke-width="1.2"/><polygon points="1580.5,324.3 1586.7,327.9 1586.7,335.1 1580.5,338.7 1574.3,335.1 1574.3,327.9" fill="#a9e6f0" stroke="#f2f4f8" stroke-width="1.6"/><path d="M1580.5 328.0 L1584.0 331.5 L1580.5 335.0 L1577.0 331.5 Z" fill="#1d2740" stroke="#f2f4f8" stroke-width="1"/><polygon points="1606.5,324.3 1612.7,327.9 1612.7,335.1 1606.5,338.7 1600.3,335.1 1600.3,327.9" fill="#dfe9f0" stroke="#f2f4f8" stroke-width="1.6"/><path d="M1606.5 328.0 L1610.0 331.5 L1606.5 335.0 L1603.0 331.5 Z" fill="#1d2740" stroke="#f2f4f8" stroke-width="1"/><polygon points="1632.5,324.3 1638.7,327.9 1638.7,335.1 1632.5,338.7 1626.3,335.1 1626.3,327.9" fill="#a9e6f0" stroke="#f2f4f8" stroke-width="1.6"/><path d="M1632.5 328.0 L1636.0 331.5 L1632.5 335.0 L1629.0 331.5 Z" fill="#1d2740" stroke="#f2f4f8" stroke-width="1"/><polygon points="1658.5,324.3 1664.7,327.9 1664.7,335.1 1658.5,338.7 1652.3,335.1 1652.3,327.9" fill="#dfe9f0" stroke="#f2f4f8" stroke-width="1.6"/><path d="M1658.5 328.0 L1662.0 331.5 L1658.5 335.0 L1655.0 331.5 Z" fill="#1d2740" stroke="#f2f4f8" stroke-width="1"/><path d="M1680 324 V338 H1692" stroke="#eef" stroke-width="1.6" fill="none"/><polygon points="1680,322 1677.5,326 1682.5,326" fill="#eef"/><polygon points="1694,338 1690,335.5 1690,340.5" fill="#eef"/><circle cx="1688" cy="329" r="4.3" fill="#5fc8e6"/><path d="M1706 324 V338 H1718" stroke="#eef" stroke-width="1.6" fill="none"/><polygon points="1706,322 1703.5,326 1708.5,326" fill="#eef"/><polygon points="1720,338 1716,335.5 1716,340.5" fill="#eef"/><rect x="1709" y="325" width="9" height="8" fill="#8d98b8" stroke="#eef" stroke-width="1"/><circle cx="1735" cy="330" r="6.5" fill="#dfe3ec"/><rect x="1735" y="331" width="9" height="8" fill="#e8eaf0" stroke="#2e3a56" stroke-width="1"/><path d="M1737 334 H1742 M1737 336.5 H1742" stroke="#2e3a56" stroke-width="0.9"/><path d="M1567 347.5 H1766 M1567 396.5 H1766" stroke="#56637f" stroke-width="2"/><path d="M1573.5 377.5 V373.5 H1577.5 M1583.5 373.5 H1587.5 V377.5 M1587.5 383.5 V387.5 H1583.5 M1577.5 387.5 H1573.5 V383.5" stroke="#eef" stroke-width="1.4" fill="none"/><rect x="1576" y="376" width="9" height="9" fill="#a8b2c8"/><path d="M1599.5 377.5 V373.5 H1603.5 M1609.5 373.5 H1613.5 V377.5 M1613.5 383.5 V387.5 H1609.5 M1603.5 387.5 H1599.5 V383.5" stroke="#eef" stroke-width="1.4" fill="none"/><rect x="1602" y="376" width="9" height="9" fill="#a8b2c8"/><path d="M1606.5 376 V385 M1602 380.5 H1611" stroke="#2e3a56" stroke-width="1"/><path d="M1625.5 377.5 V373.5 H1629.5 M1635.5 373.5 H1639.5 V377.5 M1639.5 383.5 V387.5 H1635.5 M1629.5 387.5 H1625.5 V383.5" stroke="#eef" stroke-width="1.4" fill="none"/><rect x="1629" y="377" width="8" height="8" fill="#6fb8d0" stroke="#eef" stroke-width="1"/><path d="M1657 376 A4 4 0 1 0 1661 380" stroke="#eef" stroke-width="2" fill="none"/><polygon points="1656,373 1660,376 1655.5,378" fill="#eef"/><circle cx="1663" cy="384" r="2.8" fill="#e0e4ee"/><path d="M1665 386 L1668 389" stroke="#e0e4ee" stroke-width="2"/><rect x="1575" y="404" width="11" height="12" fill="#8d98b8" stroke="#eef" stroke-width="1.2"/><rect x="1581" y="411" width="7" height="6" fill="#eef"/><polygon points="1751.0,412.2 1759.0,412.2 1755,407.8" fill="#eeecf3"/><path d="M1590 589 L1595.5 595 L1604 583" stroke="#48d07a" stroke-width="2.8" fill="none"/><path d="M1692.5 584 L1703 595 M1703 584 L1692.5 595" stroke="#f39aa2" stroke-width="3.2"/><circle cx="1580" cy="615.5" r="6" fill="#c8cedc" stroke="#eef"/><path d="M1574 615.5 L1571 612 M1586 619 L1589 621" stroke="#eef" stroke-width="1.4"/><polygon points="1751.0,613.3 1759.0,613.3 1755,617.7" fill="#eeecf3"/><path d="M1567 630 H1766" stroke="#56637f" stroke-width="2"/><rect x="1578" y="657" width="10" height="10" fill="#9ad8ea" stroke="#eef"/><circle cx="1577" cy="657" r="3" fill="#c8cedc"/><polygon points="1751.0,663.2 1759.0,663.2 1755,658.8" fill="#eeecf3"/><path d="M1741 692 h2 M1745 692 h2 M1749 692 h2 M1741 714 h2 M1745 714 h2 M1749 714 h2 M1741 768 h2 M1745 768 h2 M1749 768 h2 M1741 790 h2 M1745 790 h2 M1749 790 h2" stroke="#eef" stroke-width="2"/><path d="M1574 737 L1581 731 L1588 737 V744 H1574 Z" fill="none" stroke="#eef" stroke-width="1.4"/><circle cx="1579" cy="740" r="3" fill="#c8cedc"/><polygon points="1751.0,739.2 1759.0,739.2 1755,734.8" fill="#eeecf3"/><circle cx="1580" cy="812" r="6" fill="#b8c0d2" stroke="#eef"/><rect x="1583" y="813" width="6" height="6" fill="#6fc7e6"/><path d="M1567 826.5 H1766" stroke="#56637f" stroke-width="2"/><path d="M1574 834 L1588 835 V847 L1574 848 Z M1578 834 V848 M1583 834.5 V847.5 M1574 839 H1588 M1574 843 H1588" fill="none" stroke="#eef" stroke-width="1.1"/><polygon points="1751.0,838.8 1759.0,838.8 1755,843.2" fill="#eeecf3"/><path d="M1577 855 H1588 V871 H1574 V858 Z" fill="#dfe3ec"/><rect x="1583" y="865" width="5" height="6" fill="#6fc7e6"/><polygon points="1751.0,860.8 1759.0,860.8 1755,865.2" fill="#eeecf3"/></svg><span class="t" style="left:1583.0px;top:174.6px;font-size:11.5px;line-height:11.5px;font-weight:400;color:#f4f2f8;transform:scaleX(0.986);text-shadow:0 0 1.2px rgba(8,12,25,0.95);">Lüftung, 3D - Modellplanung</span><span class="t" style="left:1566.5px;top:231.6px;font-size:11.5px;line-height:11.5px;font-weight:400;color:#f4f2f8;transform:scaleX(0.980);text-shadow:0 0 1.2px rgba(8,12,25,0.95);">Schnitte / Ansichten</span><span class="t" style="left:1572.5px;top:277.8px;font-size:11px;line-height:11px;font-weight:400;color:#f4f2f8;transform:scaleX(0.962);text-shadow:0 0 1.2px rgba(8,12,25,0.95);-webkit-text-stroke:0.85px currentColor;">Ansichten</span><span class="t" style="left:1572.5px;top:352.8px;font-size:11px;line-height:11px;font-weight:400;color:#f4f2f8;transform:scaleX(0.977);text-shadow:0 0 1.2px rgba(8,12,25,0.95);-webkit-text-stroke:0.85px currentColor;">Ansichtsfenster</span><span class="t" style="left:1592.0px;top:404.8px;font-size:11px;line-height:11px;font-weight:400;color:#f4f2f8;transform:scaleX(0.961);text-shadow:0 0 1.2px rgba(8,12,25,0.95);-webkit-text-stroke:0.85px currentColor;">Gespeicherte Ansichten</span><span class="t" style="left:1589.0px;top:428.1px;font-size:10.5px;line-height:10.5px;font-weight:400;color:#f4f4f8;text-shadow:0 0 1.2px rgba(8,12,25,0.95);">test</span><span class="t" style="left:1590.0px;top:563.3px;font-size:11px;line-height:11px;font-weight:400;color:#f0eef4;transform:scaleX(1.015);text-shadow:0 0 1.2px rgba(8,12,25,0.95);">test</span><span class="t" style="left:1607.0px;top:584.8px;font-size:11px;line-height:11px;font-weight:400;color:#f0eef4;transform:scaleX(0.858);text-shadow:0 0 1.2px rgba(8,12,25,0.95);">Sichern</span><span class="t" style="left:1709.0px;top:584.8px;font-size:11px;line-height:11px;font-weight:400;color:#f0eef4;transform:scaleX(0.902);text-shadow:0 0 1.2px rgba(8,12,25,0.95);">Löschen</span><span class="t" style="left:1592.0px;top:610.3px;font-size:11px;line-height:11px;font-weight:400;color:#f4f2f8;transform:scaleX(0.978);text-shadow:0 0 1.2px rgba(8,12,25,0.95);-webkit-text-stroke:0.85px currentColor;">3D-Schnitte/Ansichten</span><span class="t" style="left:1572.5px;top:635.3px;font-size:11px;line-height:11px;font-weight:400;color:#f4f2f8;transform:scaleX(0.959);text-shadow:0 0 1.2px rgba(8,12,25,0.95);-webkit-text-stroke:0.85px currentColor;">Temporäre Schnitte</span><span class="t" style="left:1592.0px;top:656.2px;font-size:11px;line-height:11px;font-weight:400;color:#f4f2f8;transform:scaleX(0.989);text-shadow:0 0 1.2px rgba(8,12,25,0.95);-webkit-text-stroke:0.85px currentColor;">Vertikalschnitt &lt;</span><span class="t" style="left:1592.0px;top:682.3px;font-size:11px;line-height:11px;font-weight:400;color:#f0eef4;transform:scaleX(0.921);text-shadow:0 0 1.2px rgba(8,12,25,0.95);">Z-Unten</span><span class="t" style="left:1592.0px;top:704.2px;font-size:11px;line-height:11px;font-weight:400;color:#f0eef4;transform:scaleX(0.885);text-shadow:0 0 1.2px rgba(8,12,25,0.95);">Z-Oben</span><span class="t" style="left:1721.0px;top:682.3px;font-size:11px;line-height:11px;font-weight:400;color:#f0eef4;transform:scaleX(1.143);text-shadow:0 0 1.2px rgba(8,12,25,0.95);">0</span><span class="t" style="left:1706.0px;top:704.2px;font-size:11px;line-height:11px;font-weight:400;color:#f0eef4;transform:scaleX(0.899);text-shadow:0 0 1.2px rgba(8,12,25,0.95);">2800</span><span class="t" style="left:1592.0px;top:732.1px;font-size:11px;line-height:11px;font-weight:400;color:#f4f2f8;text-shadow:0 0 1.2px rgba(8,12,25,0.95);-webkit-text-stroke:0.85px currentColor;">Horizontalschnitt &lt;</span><span class="t" style="left:1592.0px;top:758.0px;font-size:11px;line-height:11px;font-weight:400;color:#f0eef4;transform:scaleX(0.921);text-shadow:0 0 1.2px rgba(8,12,25,0.95);">Z-Unten</span><span class="t" style="left:1592.0px;top:780.1px;font-size:11px;line-height:11px;font-weight:400;color:#f0eef4;transform:scaleX(0.885);text-shadow:0 0 1.2px rgba(8,12,25,0.95);">Z-Oben</span><span class="t" style="left:1706.0px;top:758.0px;font-size:11px;line-height:11px;font-weight:400;color:#f0eef4;transform:scaleX(0.899);text-shadow:0 0 1.2px rgba(8,12,25,0.95);">2300</span><span class="t" style="left:1706.0px;top:780.1px;font-size:11px;line-height:11px;font-weight:400;color:#f0eef4;transform:scaleX(0.899);text-shadow:0 0 1.2px rgba(8,12,25,0.95);">2800</span><span class="t" style="left:1592.0px;top:807.9px;font-size:11px;line-height:11px;font-weight:400;color:#f4f2f8;transform:scaleX(0.972);text-shadow:0 0 1.2px rgba(8,12,25,0.95);-webkit-text-stroke:0.85px currentColor;">Schnittebenen ausschalten</span><span class="t" style="left:1592.0px;top:835.5px;font-size:11px;line-height:11px;font-weight:400;color:#f4f2f8;transform:scaleX(0.932);text-shadow:0 0 1.2px rgba(8,12,25,0.95);-webkit-text-stroke:0.85px currentColor;">Perspektive &lt;</span><span class="t" style="left:1592.0px;top:857.8px;font-size:11px;line-height:11px;font-weight:400;color:#f4f2f8;transform:scaleX(0.983);text-shadow:0 0 1.2px rgba(8,12,25,0.95);-webkit-text-stroke:0.85px currentColor;">Freistellen/Ausblenden</span><div class="a" style="left:280px;top:915px;width:1276px;height:1.5px;background:#1e2535;"></div><div class="a" style="left:280px;top:916.5px;width:1276px;height:31.5px;background:#ebe9ed;"></div><div class="a" style="left:280px;top:916px;width:22.5px;height:32px;background:#27314a;"></div><svg class="a" style="left:280px;top:916px;" width="24" height="32" viewBox="280 916 24 32"><path d="M283 920.5 h15 M283 923.5 h15" stroke="#eef" stroke-width="1.6" stroke-dasharray="1.6 1"/><path d="M285.5 931.5 L294.5 940.5 M294.5 931.5 L285.5 940.5" stroke="#f2f2f6" stroke-width="2.2"/></svg><span class="t" style="left:305.0px;top:924.3px;font-size:11px;line-height:11px;font-weight:400;color:#111;font-family:'Liberation Mono',monospace;transform:scaleX(0.965);-webkit-text-stroke:0;-webkit-text-stroke:0.35px #111;">Regeneriert Modell.</span><span class="t" style="left:305.0px;top:938.3px;font-size:11px;line-height:11px;font-weight:400;color:#111;font-family:'Liberation Mono',monospace;transform:scaleX(0.981);-webkit-text-stroke:0;-webkit-text-stroke:0.35px #111;">Vordere Schnittlinie Startpunkt: *Abbruch*</span><div class="a" style="left:0px;top:948px;width:1778px;height:52px;background:#ffffff;"></div><svg class="a" style="left:0px;top:948px;" width="1778" height="52" viewBox="0 948 1778 52"><circle cx="26" cy="973.5" r="21" fill="#1b3c48"/><path d="M18 962 L37 973.5 L18 985 Z" fill="#fff"/><rect x="143" y="971.5" width="446" height="4.5" fill="#142c38" rx="2"/><rect x="589" y="971.8" width="916" height="3.8" fill="#d4d4d4" rx="1.5"/><circle cx="589" cy="973.8" r="6.5" fill="#0e1f28"/><polygon points="1625.36,971.82 1625.36,976.18 1622.53,976.30 1622.12,977.28 1624.04,979.36 1620.96,982.44 1618.88,980.52 1617.90,980.93 1617.78,983.76 1613.42,983.76 1613.30,980.93 1612.32,980.52 1610.24,982.44 1607.16,979.36 1609.08,977.28 1608.67,976.30 1605.84,976.18 1605.84,971.82 1608.67,971.70 1609.08,970.72 1607.16,968.64 1610.24,965.56 1612.32,967.48 1613.30,967.07 1613.42,964.24 1617.78,964.24 1617.90,967.07 1618.88,967.48 1620.96,965.56 1624.04,968.64 1622.12,970.72 1622.53,971.70" fill="none" stroke="#222" stroke-width="1.6"/><circle cx="1615.6" cy="974" r="3.3" fill="none" stroke="#222" stroke-width="1.6"/><path d="M1649 967 L1657 974 L1649 980.5 Z" fill="none" stroke="#999" stroke-width="1"/><path d="M1656.5 967 L1664.5 974 L1656.5 980.5 Z" fill="none" stroke="#333" stroke-width="1.5"/><path d="M1664 967 L1676 974 L1664 980.5 Z" fill="none" stroke="#222" stroke-width="1.8"/><path d="M1697.5 970 H1702 L1710 964 V983 L1702 977 H1697.5 Z" fill="none" stroke="#222" stroke-width="1.8" stroke-linejoin="round"/><path d="M1713 970 A4 4 0 0 1 1713 978 M1716 966 A9 9 0 0 1 1716 982" fill="none" stroke="#222" stroke-width="1.7"/><path d="M1763.5 965 L1755.5 973 M1755.5 967.5 V973 H1761 M1745 983 L1753 975 M1748 975 H1753 V980" fill="none" stroke="#222" stroke-width="1.8"/></svg><span class="t" style="left:66.0px;top:968.6px;font-size:10.5px;line-height:10.5px;font-weight:400;color:#2a2a2a;transform:scaleX(0.897);-webkit-text-stroke:0;">01:44 / 05:18</span>
</body></html>
